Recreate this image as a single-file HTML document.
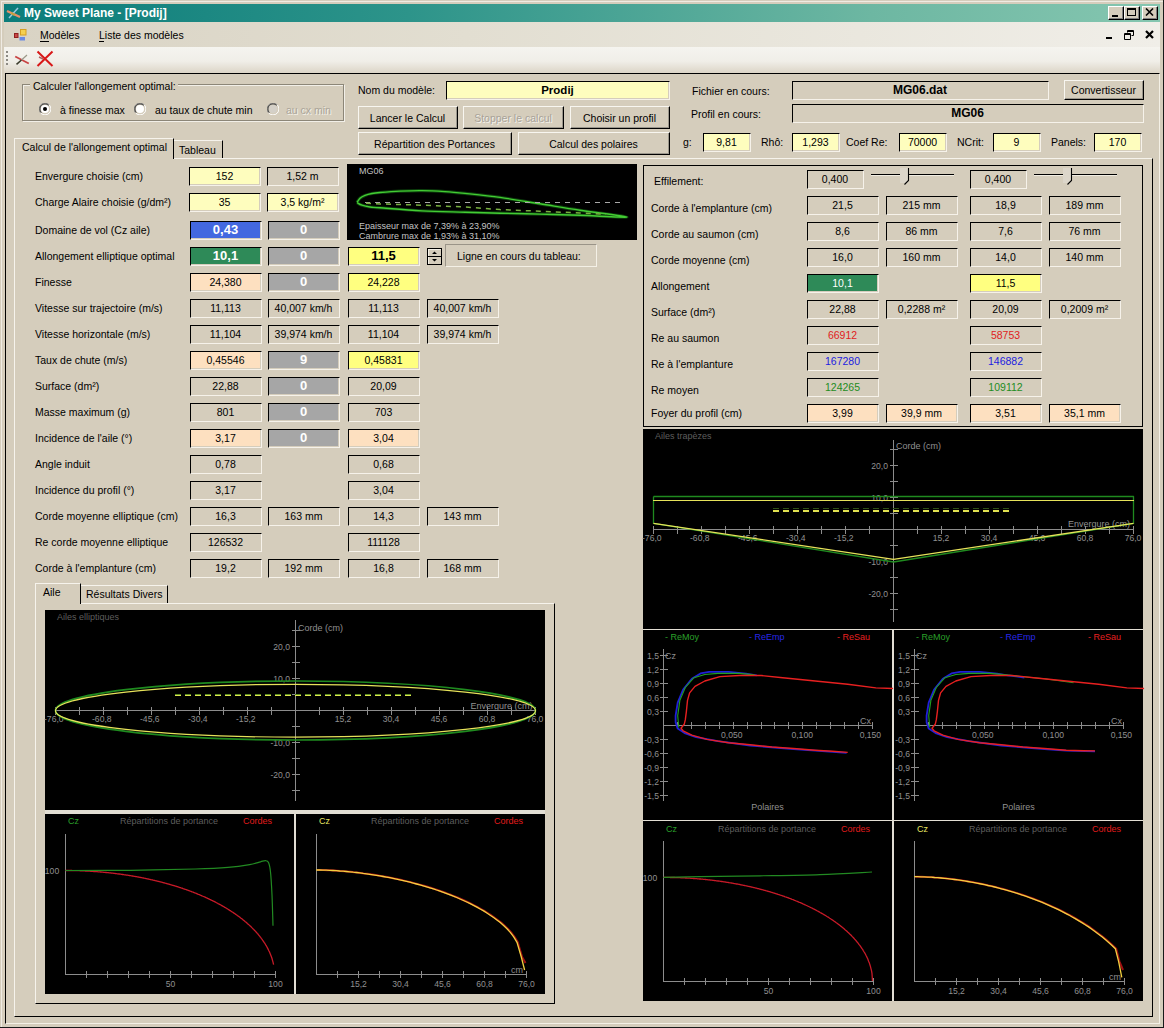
<!DOCTYPE html><html><head><meta charset="utf-8"><style>html,body{margin:0;padding:0;width:1164px;height:1028px;overflow:hidden;background:#d5cdbc;}body>div,body>svg{position:absolute;}.t{white-space:nowrap;font-family:"Liberation Sans",sans-serif;}</style></head><body><div style="left:0px;top:0px;width:1164px;height:1028px;background:#d5cdbc;"></div>
<div style="left:1px;top:1px;width:1162px;height:1px;background:#efebe3;"></div>
<div style="left:1px;top:1px;width:1px;height:1026px;background:#efebe3;"></div>
<div style="left:0px;top:1027px;width:1164px;height:1px;background:#1a1a1a;"></div>
<div style="left:1163px;top:0px;width:1px;height:1028px;background:#1a1a1a;"></div>
<div style="left:4px;top:4px;width:1156px;height:18px;background:linear-gradient(to right,#0b7c7a 0%,#2d948a 35%,#6db7a2 75%,#85c6b0 100%);"></div>
<div class="t" style="left:24px;top:5.0px;line-height:16px;font-size:12px;color:#fff;font-weight:bold;">My Sweet Plane - [Prodij]</div>
<svg style="left:5px;top:5px;width:17px;height:16px" viewBox="0 0 17 16"><path d="M2 6 L15 12" stroke="#e8906a" stroke-width="2.4"/><path d="M4 13 L13 3" stroke="#9cc8e0" stroke-width="1.5"/><path d="M6 8 L10 10" stroke="#c8a040" stroke-width="2"/></svg>
<div style="left:1108px;top:6px;width:16px;height:14px;background:#d5cdbc;border-top:1px solid #fff;border-left:1px solid #fff;border-right:1px solid #000;border-bottom:1px solid #000;box-sizing:border-box;box-shadow:inset -1px -1px 0 #808080;"></div>
<div style="left:1112px;top:15px;width:6px;height:2px;background:#000;"></div>
<div style="left:1124px;top:6px;width:16px;height:14px;background:#d5cdbc;border-top:1px solid #fff;border-left:1px solid #fff;border-right:1px solid #000;border-bottom:1px solid #000;box-sizing:border-box;box-shadow:inset -1px -1px 0 #808080;"></div>
<div style="left:1127px;top:8px;width:9px;height:8px;border:1px solid #000;border-top-width:2px;box-sizing:border-box;"></div>
<div style="left:1142px;top:6px;width:16px;height:14px;background:#d5cdbc;border-top:1px solid #fff;border-left:1px solid #fff;border-right:1px solid #000;border-bottom:1px solid #000;box-sizing:border-box;box-shadow:inset -1px -1px 0 #808080;"></div>
<svg style="left:1145px;top:8px;width:9px;height:8px" viewBox="0 0 9 8"><path d="M1 0.5 L8 7.5 M8 0.5 L1 7.5" stroke="#000" stroke-width="1.6"/></svg>
<div style="left:4px;top:22px;width:1156px;height:25px;background:linear-gradient(to right,#d9d3c4 0%,#e2ded1 40%,#f0eee8 100%);"></div>
<svg style="left:13px;top:28px;width:14px;height:14px" viewBox="0 0 14 14"><rect x="1.5" y="5.5" width="3.5" height="4" fill="#c84848" stroke="#902020" stroke-width="1"/><rect x="7.5" y="1.5" width="5.5" height="5.5" fill="#f4d050" stroke="#d8a020" stroke-width="1"/><rect x="6.5" y="9" width="5.5" height="3.5" fill="#6a8ae4"/></svg>
<div class="t" style="left:40px;top:27.0px;line-height:16px;font-size:10.5px;color:#000;font-weight:normal;">Modèles</div>
<div style="left:40px;top:41px;width:9px;height:1px;background:#000;"></div>
<div class="t" style="left:99px;top:27.0px;line-height:16px;font-size:10.5px;color:#000;font-weight:normal;">Liste des modèles</div>
<div style="left:99px;top:41px;width:5px;height:1px;background:#000;"></div>
<div style="left:1106px;top:37px;width:6px;height:2px;background:#000;"></div>
<svg style="left:1124px;top:30px;width:10px;height:10px" viewBox="0 0 10 10"><path d="M3.5 0.5 H9.5 V5.5 H7.5 M3.5 0.5 V2.5 M0.5 3.5 H6.5 V9.5 H0.5 Z M0.5 4.5 H6.5 M3.5 1.5 H9.5" stroke="#000" fill="none" stroke-width="1"/></svg>
<svg style="left:1145px;top:30px;width:9px;height:9px" viewBox="0 0 9 9"><path d="M1 1 L8 8 M8 1 L1 8" stroke="#000" stroke-width="2.2"/></svg>
<div style="left:4px;top:47px;width:1156px;height:26px;background:linear-gradient(to bottom,#f5f4ef 0%,#f0eee8 55%,#dcd5c7 100%);"></div>
<div style="left:6px;top:51px;width:2px;height:2px;background:#8c8a84;"></div>
<div style="left:6px;top:55px;width:2px;height:2px;background:#8c8a84;"></div>
<div style="left:6px;top:59px;width:2px;height:2px;background:#8c8a84;"></div>
<div style="left:6px;top:63px;width:2px;height:2px;background:#8c8a84;"></div>
<svg style="left:14px;top:53px;width:16px;height:13px" viewBox="0 0 16 13"><path d="M1.2 3.5 L14.8 10.5" stroke="#c84444" stroke-width="1.8"/><path d="M2.5 11.3 L7.5 7" stroke="#3c3c2c" stroke-width="1.6"/><path d="M7.5 7 L13 2" stroke="#9a9888" stroke-width="1.2"/></svg>
<svg style="left:36px;top:50px;width:18px;height:18px" viewBox="0 0 18 18"><path d="M3 7 L7 9" stroke="#b06060" stroke-width="1.4"/><path d="M1.5 1.5 L16.5 16 M16.5 1.5 L1.5 16" stroke="#d81818" stroke-width="2"/></svg>
<div style="left:5px;top:73px;width:1155px;height:951px;border-top:1px solid #000;border-left:1px solid #000;border-right:1px solid #f4f0e6;border-bottom:1px solid #f4f0e6;box-sizing:border-box;"></div>
<div style="left:22px;top:84px;width:322px;height:37px;border:1px solid #8c8678;box-shadow:1px 1px 0 #f2efe8, inset 1px 1px 0 #f2efe8;box-sizing:border-box;"></div>
<div style="left:30px;top:80px;width:148px;height:12px;background:#d5cdbc;"></div>
<div class="t" style="left:33px;top:78.0px;line-height:16px;font-size:10.5px;color:#000;font-weight:normal;">Calculer l'allongement optimal:</div>
<svg style="left:39px;top:103px;width:12px;height:12px" viewBox="0 0 12 12"><path d="M10.5 2.2 A5.5 5.5 0 0 0 1.5 9.8" stroke="#808080" fill="none" stroke-width="1"/><path d="M9.6 2.4 A4.5 4.5 0 0 0 2.4 9.6" stroke="#404040" fill="none" stroke-width="1"/><path d="M1.8 10.2 A5.5 5.5 0 0 0 10.2 1.8" stroke="#fff" fill="none" stroke-width="1"/><circle cx="6" cy="6" r="4" fill="#fff"/><circle cx="6" cy="6" r="2" fill="#000"/></svg>
<div class="t" style="left:60px;top:102.0px;line-height:16px;font-size:10.5px;color:#000;font-weight:normal;">à finesse max</div>
<svg style="left:134px;top:103px;width:12px;height:12px" viewBox="0 0 12 12"><path d="M10.5 2.2 A5.5 5.5 0 0 0 1.5 9.8" stroke="#808080" fill="none" stroke-width="1"/><path d="M9.6 2.4 A4.5 4.5 0 0 0 2.4 9.6" stroke="#404040" fill="none" stroke-width="1"/><path d="M1.8 10.2 A5.5 5.5 0 0 0 10.2 1.8" stroke="#fff" fill="none" stroke-width="1"/><circle cx="6" cy="6" r="4" fill="#fff"/></svg>
<div class="t" style="left:155px;top:102.0px;line-height:16px;font-size:10.5px;color:#000;font-weight:normal;">au taux de chute min</div>
<svg style="left:267px;top:103px;width:12px;height:12px" viewBox="0 0 12 12"><path d="M10.5 2.2 A5.5 5.5 0 0 0 1.5 9.8" stroke="#808080" fill="none" stroke-width="1"/><path d="M9.6 2.4 A4.5 4.5 0 0 0 2.4 9.6" stroke="#404040" fill="none" stroke-width="1"/><path d="M1.8 10.2 A5.5 5.5 0 0 0 10.2 1.8" stroke="#fff" fill="none" stroke-width="1"/><circle cx="6" cy="6" r="4" fill="#d4d0c8"/></svg>
<div class="t" style="left:287px;top:103.0px;line-height:16px;font-size:10.5px;color:#f4f1ea;font-weight:normal;">au cx min</div>
<div class="t" style="left:286px;top:102.0px;line-height:16px;font-size:10.5px;color:#aaa498;font-weight:normal;">au cx min</div>
<div class="t" style="left:358px;top:82.0px;line-height:16px;font-size:10.5px;color:#000;font-weight:normal;">Nom du modèle:</div>
<div style="left:446px;top:81px;width:224px;height:19px;background:#fefdbe;border-top:1px solid #000;border-left:1px solid #000;border-bottom:1px solid #f6f2ea;border-right:1px solid #f6f2ea;box-sizing:border-box;box-shadow:inset -1px -1px 0 #d5cdbc;"></div>
<div class="t" style="left:445.5px;width:224px;text-align:center;top:81.5px;line-height:16px;font-size:11.5px;color:#000;font-weight:bold;">Prodij</div>
<div style="left:358px;top:106px;width:100px;height:23px;background:#d5cdbc;border-top:1px solid #f8f6f0;border-left:1px solid #f8f6f0;border-right:1px solid #000;border-bottom:1px solid #000;box-sizing:border-box;box-shadow:inset -1px -1px 0 #9a968c;"></div>
<div class="t" style="left:357.5px;width:100px;text-align:center;top:109.5px;line-height:16px;font-size:10.5px;color:#000;font-weight:normal;">Lancer le Calcul</div>
<div style="left:463px;top:106px;width:101px;height:23px;background:#d5cdbc;border-top:1px solid #f8f6f0;border-left:1px solid #f8f6f0;border-right:1px solid #000;border-bottom:1px solid #000;box-sizing:border-box;box-shadow:inset -1px -1px 0 #9a968c;"></div>
<div class="t" style="left:463.5px;width:101px;text-align:center;top:110.5px;line-height:16px;font-size:10.5px;color:#f4f2ec;font-weight:normal;">Stopper le calcul</div>
<div class="t" style="left:462.5px;width:101px;text-align:center;top:109.5px;line-height:16px;font-size:10.5px;color:#a8a298;font-weight:normal;">Stopper le calcul</div>
<div style="left:570px;top:106px;width:100px;height:23px;background:#d5cdbc;border-top:1px solid #f8f6f0;border-left:1px solid #f8f6f0;border-right:1px solid #000;border-bottom:1px solid #000;box-sizing:border-box;box-shadow:inset -1px -1px 0 #9a968c;"></div>
<div class="t" style="left:569.5px;width:100px;text-align:center;top:109.5px;line-height:16px;font-size:10.5px;color:#000;font-weight:normal;">Choisir un profil</div>
<div style="left:358px;top:132px;width:154px;height:23px;background:#d5cdbc;border-top:1px solid #f8f6f0;border-left:1px solid #f8f6f0;border-right:1px solid #000;border-bottom:1px solid #000;box-sizing:border-box;box-shadow:inset -1px -1px 0 #9a968c;"></div>
<div class="t" style="left:357.5px;width:154px;text-align:center;top:135.5px;line-height:16px;font-size:10.5px;color:#000;font-weight:normal;">Répartition des Portances</div>
<div style="left:518px;top:132px;width:152px;height:23px;background:#d5cdbc;border-top:1px solid #f8f6f0;border-left:1px solid #f8f6f0;border-right:1px solid #000;border-bottom:1px solid #000;box-sizing:border-box;box-shadow:inset -1px -1px 0 #9a968c;"></div>
<div class="t" style="left:517.5px;width:152px;text-align:center;top:135.5px;line-height:16px;font-size:10.5px;color:#000;font-weight:normal;">Calcul des polaires</div>
<div class="t" style="left:692px;top:83.0px;line-height:16px;font-size:10.5px;color:#000;font-weight:normal;">Fichier en cours:</div>
<div style="left:792px;top:81px;width:257px;height:19px;background:#d5cdbc;border-top:1px solid #000;border-left:1px solid #000;border-bottom:1px solid #f6f2ea;border-right:1px solid #f6f2ea;box-sizing:border-box;box-shadow:inset -1px -1px 0 #d5cdbc;"></div>
<div class="t" style="left:791.5px;width:257px;text-align:center;top:81.5px;line-height:16px;font-size:12px;color:#000;font-weight:bold;">MG06.dat</div>
<div style="left:1064px;top:80px;width:80px;height:20px;background:#d5cdbc;border-top:1px solid #f8f6f0;border-left:1px solid #f8f6f0;border-right:1px solid #000;border-bottom:1px solid #000;box-sizing:border-box;box-shadow:inset -1px -1px 0 #9a968c;"></div>
<div class="t" style="left:1063.5px;width:80px;text-align:center;top:82.0px;line-height:16px;font-size:10.5px;color:#000;font-weight:normal;">Convertisseur</div>
<div class="t" style="left:691px;top:106.0px;line-height:16px;font-size:10.5px;color:#000;font-weight:normal;">Profil en cours:</div>
<div style="left:792px;top:104px;width:352px;height:19px;background:#d5cdbc;border-top:1px solid #000;border-left:1px solid #000;border-bottom:1px solid #f6f2ea;border-right:1px solid #f6f2ea;box-sizing:border-box;box-shadow:inset -1px -1px 0 #d5cdbc;"></div>
<div class="t" style="left:791.5px;width:352px;text-align:center;top:104.5px;line-height:16px;font-size:12px;color:#000;font-weight:bold;">MG06</div>
<div class="t" style="left:683px;top:134.0px;line-height:16px;font-size:10.5px;color:#000;font-weight:normal;">g:</div>
<div style="left:703px;top:133px;width:48px;height:19px;background:#fefdbe;border-top:1px solid #000;border-left:1px solid #000;border-bottom:1px solid #f6f2ea;border-right:1px solid #f6f2ea;box-sizing:border-box;box-shadow:inset -1px -1px 0 #d5cdbc;"></div>
<div class="t" style="left:702.5px;width:48px;text-align:center;top:133.5px;line-height:16px;font-size:10.5px;color:#000;font-weight:normal;">9,81</div>
<div class="t" style="left:761px;top:134.0px;line-height:16px;font-size:10.5px;color:#000;font-weight:normal;">Rhô:</div>
<div style="left:792px;top:133px;width:48px;height:19px;background:#fefdbe;border-top:1px solid #000;border-left:1px solid #000;border-bottom:1px solid #f6f2ea;border-right:1px solid #f6f2ea;box-sizing:border-box;box-shadow:inset -1px -1px 0 #d5cdbc;"></div>
<div class="t" style="left:791.5px;width:48px;text-align:center;top:133.5px;line-height:16px;font-size:10.5px;color:#000;font-weight:normal;">1,293</div>
<div class="t" style="left:846px;top:134.0px;line-height:16px;font-size:10.5px;color:#000;font-weight:normal;">Coef Re:</div>
<div style="left:899px;top:133px;width:48px;height:19px;background:#fefdbe;border-top:1px solid #000;border-left:1px solid #000;border-bottom:1px solid #f6f2ea;border-right:1px solid #f6f2ea;box-sizing:border-box;box-shadow:inset -1px -1px 0 #d5cdbc;"></div>
<div class="t" style="left:898.5px;width:48px;text-align:center;top:133.5px;line-height:16px;font-size:10.5px;color:#000;font-weight:normal;">70000</div>
<div class="t" style="left:957px;top:134.0px;line-height:16px;font-size:10.5px;color:#000;font-weight:normal;">NCrit:</div>
<div style="left:993px;top:133px;width:48px;height:19px;background:#fefdbe;border-top:1px solid #000;border-left:1px solid #000;border-bottom:1px solid #f6f2ea;border-right:1px solid #f6f2ea;box-sizing:border-box;box-shadow:inset -1px -1px 0 #d5cdbc;"></div>
<div class="t" style="left:992.5px;width:48px;text-align:center;top:133.5px;line-height:16px;font-size:10.5px;color:#000;font-weight:normal;">9</div>
<div class="t" style="left:1051px;top:134.0px;line-height:16px;font-size:10.5px;color:#000;font-weight:normal;">Panels:</div>
<div style="left:1094px;top:133px;width:48px;height:19px;background:#fefdbe;border-top:1px solid #000;border-left:1px solid #000;border-bottom:1px solid #f6f2ea;border-right:1px solid #f6f2ea;box-sizing:border-box;box-shadow:inset -1px -1px 0 #d5cdbc;"></div>
<div class="t" style="left:1093.5px;width:48px;text-align:center;top:133.5px;line-height:16px;font-size:10.5px;color:#000;font-weight:normal;">170</div>
<div style="left:14px;top:158px;width:1139px;height:859px;border-top:1px solid #f6f3ec;border-left:1px solid #f6f3ec;border-right:1px solid #000;border-bottom:1px solid #000;box-sizing:border-box;"></div>
<div style="left:14px;top:138px;width:160px;height:21px;background:#d5cdbc;border-top:1px solid #f6f3ec;border-left:1px solid #f6f3ec;border-right:1px solid #000;box-sizing:border-box;"></div>
<div class="t" style="left:22px;top:139.3px;line-height:16px;font-size:10.5px;color:#000;font-weight:normal;">Calcul de l'allongement optimal</div>
<div style="left:174px;top:140px;width:49px;height:18px;background:#d5cdbc;border-top:1px solid #f6f3ec;border-right:1px solid #000;box-sizing:border-box;"></div>
<div class="t" style="left:179px;top:141.5px;line-height:16px;font-size:10.5px;color:#000;font-weight:normal;">Tableau</div>
<div class="t" style="left:35px;top:168.0px;line-height:16px;font-size:10.5px;color:#000;font-weight:normal;">Envergure choisie (cm)</div>
<div style="left:189px;top:167px;width:72px;height:19px;background:#fefdbe;border-top:1px solid #000;border-left:1px solid #000;border-bottom:1px solid #f6f2ea;border-right:1px solid #f6f2ea;box-sizing:border-box;box-shadow:inset -1px -1px 0 #d5cdbc;"></div>
<div class="t" style="left:188.5px;width:72px;text-align:center;top:167.5px;line-height:16px;font-size:10.5px;color:#000;font-weight:normal;">152</div>
<div style="left:267px;top:167px;width:72px;height:19px;background:#d5cdbc;border-top:1px solid #000;border-left:1px solid #000;border-bottom:1px solid #f6f2ea;border-right:1px solid #f6f2ea;box-sizing:border-box;box-shadow:inset -1px -1px 0 #d5cdbc;"></div>
<div class="t" style="left:266.5px;width:72px;text-align:center;top:167.5px;line-height:16px;font-size:10.5px;color:#000;font-weight:normal;">1,52 m</div>
<div class="t" style="left:35px;top:194.0px;line-height:16px;font-size:10.5px;color:#000;font-weight:normal;">Charge Alaire choisie (g/dm²)</div>
<div style="left:189px;top:193px;width:72px;height:19px;background:#fefdbe;border-top:1px solid #000;border-left:1px solid #000;border-bottom:1px solid #f6f2ea;border-right:1px solid #f6f2ea;box-sizing:border-box;box-shadow:inset -1px -1px 0 #d5cdbc;"></div>
<div class="t" style="left:188.5px;width:72px;text-align:center;top:193.5px;line-height:16px;font-size:10.5px;color:#000;font-weight:normal;">35</div>
<div style="left:267px;top:193px;width:72px;height:19px;background:#fefdbe;border-top:1px solid #000;border-left:1px solid #000;border-bottom:1px solid #f6f2ea;border-right:1px solid #f6f2ea;box-sizing:border-box;box-shadow:inset -1px -1px 0 #d5cdbc;"></div>
<div class="t" style="left:266.5px;width:72px;text-align:center;top:193.5px;line-height:16px;font-size:10.5px;color:#000;font-weight:normal;">3,5 kg/m²</div>
<div class="t" style="left:35px;top:222.0px;line-height:16px;font-size:10.5px;color:#000;font-weight:normal;">Domaine de vol (Cz aile)</div>
<div style="left:190px;top:221px;width:72px;height:19px;background:#4368e0;border-top:1px solid #000;border-left:1px solid #000;border-bottom:1px solid #f6f2ea;border-right:1px solid #f6f2ea;box-sizing:border-box;box-shadow:inset -1px -1px 0 #d5cdbc;"></div>
<div class="t" style="left:189.5px;width:72px;text-align:center;top:221.5px;line-height:16px;font-size:13px;color:#fff;font-weight:bold;">0,43</div>
<div style="left:268px;top:221px;width:72px;height:19px;background:#a6a6a6;border-top:1px solid #000;border-left:1px solid #000;border-bottom:1px solid #f6f2ea;border-right:1px solid #f6f2ea;box-sizing:border-box;box-shadow:inset -1px -1px 0 #d5cdbc;"></div>
<div class="t" style="left:267.5px;width:72px;text-align:center;top:221.5px;line-height:16px;font-size:13px;color:#fff;font-weight:bold;">0</div>
<div class="t" style="left:35px;top:248.0px;line-height:16px;font-size:10.5px;color:#000;font-weight:normal;">Allongement elliptique optimal</div>
<div style="left:190px;top:247px;width:72px;height:19px;background:#2e8a58;border-top:1px solid #000;border-left:1px solid #000;border-bottom:1px solid #f6f2ea;border-right:1px solid #f6f2ea;box-sizing:border-box;box-shadow:inset -1px -1px 0 #d5cdbc;"></div>
<div class="t" style="left:189.5px;width:72px;text-align:center;top:247.5px;line-height:16px;font-size:13px;color:#fff;font-weight:bold;">10,1</div>
<div style="left:268px;top:247px;width:72px;height:19px;background:#a6a6a6;border-top:1px solid #000;border-left:1px solid #000;border-bottom:1px solid #f6f2ea;border-right:1px solid #f6f2ea;box-sizing:border-box;box-shadow:inset -1px -1px 0 #d5cdbc;"></div>
<div class="t" style="left:267.5px;width:72px;text-align:center;top:247.5px;line-height:16px;font-size:13px;color:#fff;font-weight:bold;">0</div>
<div style="left:348px;top:247px;width:72px;height:19px;background:#ffff80;border-top:1px solid #000;border-left:1px solid #000;border-bottom:1px solid #f6f2ea;border-right:1px solid #f6f2ea;box-sizing:border-box;box-shadow:inset -1px -1px 0 #d5cdbc;"></div>
<div class="t" style="left:347.5px;width:72px;text-align:center;top:247.5px;line-height:16px;font-size:13px;color:#000;font-weight:bold;">11,5</div>
<div class="t" style="left:35px;top:274.0px;line-height:16px;font-size:10.5px;color:#000;font-weight:normal;">Finesse</div>
<div style="left:190px;top:273px;width:72px;height:19px;background:#fde0c0;border-top:1px solid #000;border-left:1px solid #000;border-bottom:1px solid #f6f2ea;border-right:1px solid #f6f2ea;box-sizing:border-box;box-shadow:inset -1px -1px 0 #d5cdbc;"></div>
<div class="t" style="left:189.5px;width:72px;text-align:center;top:273.5px;line-height:16px;font-size:10.5px;color:#000;font-weight:normal;">24,380</div>
<div style="left:268px;top:273px;width:72px;height:19px;background:#a6a6a6;border-top:1px solid #000;border-left:1px solid #000;border-bottom:1px solid #f6f2ea;border-right:1px solid #f6f2ea;box-sizing:border-box;box-shadow:inset -1px -1px 0 #d5cdbc;"></div>
<div class="t" style="left:267.5px;width:72px;text-align:center;top:273.5px;line-height:16px;font-size:13px;color:#fff;font-weight:bold;">0</div>
<div style="left:348px;top:273px;width:72px;height:19px;background:#ffff80;border-top:1px solid #000;border-left:1px solid #000;border-bottom:1px solid #f6f2ea;border-right:1px solid #f6f2ea;box-sizing:border-box;box-shadow:inset -1px -1px 0 #d5cdbc;"></div>
<div class="t" style="left:347.5px;width:72px;text-align:center;top:273.5px;line-height:16px;font-size:10.5px;color:#000;font-weight:normal;">24,228</div>
<div class="t" style="left:35px;top:300.0px;line-height:16px;font-size:10.5px;color:#000;font-weight:normal;">Vitesse sur trajectoire (m/s)</div>
<div style="left:190px;top:299px;width:72px;height:19px;background:#d5cdbc;border-top:1px solid #000;border-left:1px solid #000;border-bottom:1px solid #f6f2ea;border-right:1px solid #f6f2ea;box-sizing:border-box;box-shadow:inset -1px -1px 0 #d5cdbc;"></div>
<div class="t" style="left:189.5px;width:72px;text-align:center;top:299.5px;line-height:16px;font-size:10.5px;color:#000;font-weight:normal;">11,113</div>
<div style="left:268px;top:299px;width:72px;height:19px;background:#d5cdbc;border-top:1px solid #000;border-left:1px solid #000;border-bottom:1px solid #f6f2ea;border-right:1px solid #f6f2ea;box-sizing:border-box;box-shadow:inset -1px -1px 0 #d5cdbc;"></div>
<div class="t" style="left:267.5px;width:72px;text-align:center;top:299.5px;line-height:16px;font-size:10.5px;color:#000;font-weight:normal;">40,007 km/h</div>
<div style="left:348px;top:299px;width:72px;height:19px;background:#d5cdbc;border-top:1px solid #000;border-left:1px solid #000;border-bottom:1px solid #f6f2ea;border-right:1px solid #f6f2ea;box-sizing:border-box;box-shadow:inset -1px -1px 0 #d5cdbc;"></div>
<div class="t" style="left:347.5px;width:72px;text-align:center;top:299.5px;line-height:16px;font-size:10.5px;color:#000;font-weight:normal;">11,113</div>
<div style="left:427px;top:299px;width:72px;height:19px;background:#d5cdbc;border-top:1px solid #000;border-left:1px solid #000;border-bottom:1px solid #f6f2ea;border-right:1px solid #f6f2ea;box-sizing:border-box;box-shadow:inset -1px -1px 0 #d5cdbc;"></div>
<div class="t" style="left:426.5px;width:72px;text-align:center;top:299.5px;line-height:16px;font-size:10.5px;color:#000;font-weight:normal;">40,007 km/h</div>
<div class="t" style="left:35px;top:326.0px;line-height:16px;font-size:10.5px;color:#000;font-weight:normal;">Vitesse horizontale (m/s)</div>
<div style="left:190px;top:325px;width:72px;height:19px;background:#d5cdbc;border-top:1px solid #000;border-left:1px solid #000;border-bottom:1px solid #f6f2ea;border-right:1px solid #f6f2ea;box-sizing:border-box;box-shadow:inset -1px -1px 0 #d5cdbc;"></div>
<div class="t" style="left:189.5px;width:72px;text-align:center;top:325.5px;line-height:16px;font-size:10.5px;color:#000;font-weight:normal;">11,104</div>
<div style="left:268px;top:325px;width:72px;height:19px;background:#d5cdbc;border-top:1px solid #000;border-left:1px solid #000;border-bottom:1px solid #f6f2ea;border-right:1px solid #f6f2ea;box-sizing:border-box;box-shadow:inset -1px -1px 0 #d5cdbc;"></div>
<div class="t" style="left:267.5px;width:72px;text-align:center;top:325.5px;line-height:16px;font-size:10.5px;color:#000;font-weight:normal;">39,974 km/h</div>
<div style="left:348px;top:325px;width:72px;height:19px;background:#d5cdbc;border-top:1px solid #000;border-left:1px solid #000;border-bottom:1px solid #f6f2ea;border-right:1px solid #f6f2ea;box-sizing:border-box;box-shadow:inset -1px -1px 0 #d5cdbc;"></div>
<div class="t" style="left:347.5px;width:72px;text-align:center;top:325.5px;line-height:16px;font-size:10.5px;color:#000;font-weight:normal;">11,104</div>
<div style="left:427px;top:325px;width:72px;height:19px;background:#d5cdbc;border-top:1px solid #000;border-left:1px solid #000;border-bottom:1px solid #f6f2ea;border-right:1px solid #f6f2ea;box-sizing:border-box;box-shadow:inset -1px -1px 0 #d5cdbc;"></div>
<div class="t" style="left:426.5px;width:72px;text-align:center;top:325.5px;line-height:16px;font-size:10.5px;color:#000;font-weight:normal;">39,974 km/h</div>
<div class="t" style="left:35px;top:352.0px;line-height:16px;font-size:10.5px;color:#000;font-weight:normal;">Taux de chute (m/s)</div>
<div style="left:190px;top:351px;width:72px;height:19px;background:#fde0c0;border-top:1px solid #000;border-left:1px solid #000;border-bottom:1px solid #f6f2ea;border-right:1px solid #f6f2ea;box-sizing:border-box;box-shadow:inset -1px -1px 0 #d5cdbc;"></div>
<div class="t" style="left:189.5px;width:72px;text-align:center;top:351.5px;line-height:16px;font-size:10.5px;color:#000;font-weight:normal;">0,45546</div>
<div style="left:268px;top:351px;width:72px;height:19px;background:#a6a6a6;border-top:1px solid #000;border-left:1px solid #000;border-bottom:1px solid #f6f2ea;border-right:1px solid #f6f2ea;box-sizing:border-box;box-shadow:inset -1px -1px 0 #d5cdbc;"></div>
<div class="t" style="left:267.5px;width:72px;text-align:center;top:351.5px;line-height:16px;font-size:13px;color:#fff;font-weight:bold;">9</div>
<div style="left:348px;top:351px;width:72px;height:19px;background:#ffff80;border-top:1px solid #000;border-left:1px solid #000;border-bottom:1px solid #f6f2ea;border-right:1px solid #f6f2ea;box-sizing:border-box;box-shadow:inset -1px -1px 0 #d5cdbc;"></div>
<div class="t" style="left:347.5px;width:72px;text-align:center;top:351.5px;line-height:16px;font-size:10.5px;color:#000;font-weight:normal;">0,45831</div>
<div class="t" style="left:35px;top:378.0px;line-height:16px;font-size:10.5px;color:#000;font-weight:normal;">Surface (dm²)</div>
<div style="left:190px;top:377px;width:72px;height:19px;background:#d5cdbc;border-top:1px solid #000;border-left:1px solid #000;border-bottom:1px solid #f6f2ea;border-right:1px solid #f6f2ea;box-sizing:border-box;box-shadow:inset -1px -1px 0 #d5cdbc;"></div>
<div class="t" style="left:189.5px;width:72px;text-align:center;top:377.5px;line-height:16px;font-size:10.5px;color:#000;font-weight:normal;">22,88</div>
<div style="left:268px;top:377px;width:72px;height:19px;background:#a6a6a6;border-top:1px solid #000;border-left:1px solid #000;border-bottom:1px solid #f6f2ea;border-right:1px solid #f6f2ea;box-sizing:border-box;box-shadow:inset -1px -1px 0 #d5cdbc;"></div>
<div class="t" style="left:267.5px;width:72px;text-align:center;top:377.5px;line-height:16px;font-size:13px;color:#fff;font-weight:bold;">0</div>
<div style="left:348px;top:377px;width:72px;height:19px;background:#d5cdbc;border-top:1px solid #000;border-left:1px solid #000;border-bottom:1px solid #f6f2ea;border-right:1px solid #f6f2ea;box-sizing:border-box;box-shadow:inset -1px -1px 0 #d5cdbc;"></div>
<div class="t" style="left:347.5px;width:72px;text-align:center;top:377.5px;line-height:16px;font-size:10.5px;color:#000;font-weight:normal;">20,09</div>
<div class="t" style="left:35px;top:404.0px;line-height:16px;font-size:10.5px;color:#000;font-weight:normal;">Masse maximum (g)</div>
<div style="left:190px;top:403px;width:72px;height:19px;background:#d5cdbc;border-top:1px solid #000;border-left:1px solid #000;border-bottom:1px solid #f6f2ea;border-right:1px solid #f6f2ea;box-sizing:border-box;box-shadow:inset -1px -1px 0 #d5cdbc;"></div>
<div class="t" style="left:189.5px;width:72px;text-align:center;top:403.5px;line-height:16px;font-size:10.5px;color:#000;font-weight:normal;">801</div>
<div style="left:268px;top:403px;width:72px;height:19px;background:#a6a6a6;border-top:1px solid #000;border-left:1px solid #000;border-bottom:1px solid #f6f2ea;border-right:1px solid #f6f2ea;box-sizing:border-box;box-shadow:inset -1px -1px 0 #d5cdbc;"></div>
<div class="t" style="left:267.5px;width:72px;text-align:center;top:403.5px;line-height:16px;font-size:13px;color:#fff;font-weight:bold;">0</div>
<div style="left:348px;top:403px;width:72px;height:19px;background:#d5cdbc;border-top:1px solid #000;border-left:1px solid #000;border-bottom:1px solid #f6f2ea;border-right:1px solid #f6f2ea;box-sizing:border-box;box-shadow:inset -1px -1px 0 #d5cdbc;"></div>
<div class="t" style="left:347.5px;width:72px;text-align:center;top:403.5px;line-height:16px;font-size:10.5px;color:#000;font-weight:normal;">703</div>
<div class="t" style="left:35px;top:430.0px;line-height:16px;font-size:10.5px;color:#000;font-weight:normal;">Incidence de l'aile (°)</div>
<div style="left:190px;top:429px;width:72px;height:19px;background:#fde0c0;border-top:1px solid #000;border-left:1px solid #000;border-bottom:1px solid #f6f2ea;border-right:1px solid #f6f2ea;box-sizing:border-box;box-shadow:inset -1px -1px 0 #d5cdbc;"></div>
<div class="t" style="left:189.5px;width:72px;text-align:center;top:429.5px;line-height:16px;font-size:10.5px;color:#000;font-weight:normal;">3,17</div>
<div style="left:268px;top:429px;width:72px;height:19px;background:#a6a6a6;border-top:1px solid #000;border-left:1px solid #000;border-bottom:1px solid #f6f2ea;border-right:1px solid #f6f2ea;box-sizing:border-box;box-shadow:inset -1px -1px 0 #d5cdbc;"></div>
<div class="t" style="left:267.5px;width:72px;text-align:center;top:429.5px;line-height:16px;font-size:13px;color:#fff;font-weight:bold;">0</div>
<div style="left:348px;top:429px;width:72px;height:19px;background:#fde0c0;border-top:1px solid #000;border-left:1px solid #000;border-bottom:1px solid #f6f2ea;border-right:1px solid #f6f2ea;box-sizing:border-box;box-shadow:inset -1px -1px 0 #d5cdbc;"></div>
<div class="t" style="left:347.5px;width:72px;text-align:center;top:429.5px;line-height:16px;font-size:10.5px;color:#000;font-weight:normal;">3,04</div>
<div class="t" style="left:35px;top:456.0px;line-height:16px;font-size:10.5px;color:#000;font-weight:normal;">Angle induit</div>
<div style="left:190px;top:455px;width:72px;height:19px;background:#d5cdbc;border-top:1px solid #000;border-left:1px solid #000;border-bottom:1px solid #f6f2ea;border-right:1px solid #f6f2ea;box-sizing:border-box;box-shadow:inset -1px -1px 0 #d5cdbc;"></div>
<div class="t" style="left:189.5px;width:72px;text-align:center;top:455.5px;line-height:16px;font-size:10.5px;color:#000;font-weight:normal;">0,78</div>
<div style="left:348px;top:455px;width:72px;height:19px;background:#d5cdbc;border-top:1px solid #000;border-left:1px solid #000;border-bottom:1px solid #f6f2ea;border-right:1px solid #f6f2ea;box-sizing:border-box;box-shadow:inset -1px -1px 0 #d5cdbc;"></div>
<div class="t" style="left:347.5px;width:72px;text-align:center;top:455.5px;line-height:16px;font-size:10.5px;color:#000;font-weight:normal;">0,68</div>
<div class="t" style="left:35px;top:482.0px;line-height:16px;font-size:10.5px;color:#000;font-weight:normal;">Incidence du profil (°)</div>
<div style="left:190px;top:481px;width:72px;height:19px;background:#d5cdbc;border-top:1px solid #000;border-left:1px solid #000;border-bottom:1px solid #f6f2ea;border-right:1px solid #f6f2ea;box-sizing:border-box;box-shadow:inset -1px -1px 0 #d5cdbc;"></div>
<div class="t" style="left:189.5px;width:72px;text-align:center;top:481.5px;line-height:16px;font-size:10.5px;color:#000;font-weight:normal;">3,17</div>
<div style="left:348px;top:481px;width:72px;height:19px;background:#d5cdbc;border-top:1px solid #000;border-left:1px solid #000;border-bottom:1px solid #f6f2ea;border-right:1px solid #f6f2ea;box-sizing:border-box;box-shadow:inset -1px -1px 0 #d5cdbc;"></div>
<div class="t" style="left:347.5px;width:72px;text-align:center;top:481.5px;line-height:16px;font-size:10.5px;color:#000;font-weight:normal;">3,04</div>
<div class="t" style="left:35px;top:508.0px;line-height:16px;font-size:10.5px;color:#000;font-weight:normal;">Corde moyenne elliptique (cm)</div>
<div style="left:190px;top:507px;width:72px;height:19px;background:#d5cdbc;border-top:1px solid #000;border-left:1px solid #000;border-bottom:1px solid #f6f2ea;border-right:1px solid #f6f2ea;box-sizing:border-box;box-shadow:inset -1px -1px 0 #d5cdbc;"></div>
<div class="t" style="left:189.5px;width:72px;text-align:center;top:507.5px;line-height:16px;font-size:10.5px;color:#000;font-weight:normal;">16,3</div>
<div style="left:268px;top:507px;width:72px;height:19px;background:#d5cdbc;border-top:1px solid #000;border-left:1px solid #000;border-bottom:1px solid #f6f2ea;border-right:1px solid #f6f2ea;box-sizing:border-box;box-shadow:inset -1px -1px 0 #d5cdbc;"></div>
<div class="t" style="left:267.5px;width:72px;text-align:center;top:507.5px;line-height:16px;font-size:10.5px;color:#000;font-weight:normal;">163 mm</div>
<div style="left:348px;top:507px;width:72px;height:19px;background:#d5cdbc;border-top:1px solid #000;border-left:1px solid #000;border-bottom:1px solid #f6f2ea;border-right:1px solid #f6f2ea;box-sizing:border-box;box-shadow:inset -1px -1px 0 #d5cdbc;"></div>
<div class="t" style="left:347.5px;width:72px;text-align:center;top:507.5px;line-height:16px;font-size:10.5px;color:#000;font-weight:normal;">14,3</div>
<div style="left:427px;top:507px;width:72px;height:19px;background:#d5cdbc;border-top:1px solid #000;border-left:1px solid #000;border-bottom:1px solid #f6f2ea;border-right:1px solid #f6f2ea;box-sizing:border-box;box-shadow:inset -1px -1px 0 #d5cdbc;"></div>
<div class="t" style="left:426.5px;width:72px;text-align:center;top:507.5px;line-height:16px;font-size:10.5px;color:#000;font-weight:normal;">143 mm</div>
<div class="t" style="left:35px;top:534.0px;line-height:16px;font-size:10.5px;color:#000;font-weight:normal;">Re corde moyenne elliptique</div>
<div style="left:190px;top:533px;width:72px;height:19px;background:#d5cdbc;border-top:1px solid #000;border-left:1px solid #000;border-bottom:1px solid #f6f2ea;border-right:1px solid #f6f2ea;box-sizing:border-box;box-shadow:inset -1px -1px 0 #d5cdbc;"></div>
<div class="t" style="left:189.5px;width:72px;text-align:center;top:533.5px;line-height:16px;font-size:10.5px;color:#000;font-weight:normal;">126532</div>
<div style="left:348px;top:533px;width:72px;height:19px;background:#d5cdbc;border-top:1px solid #000;border-left:1px solid #000;border-bottom:1px solid #f6f2ea;border-right:1px solid #f6f2ea;box-sizing:border-box;box-shadow:inset -1px -1px 0 #d5cdbc;"></div>
<div class="t" style="left:347.5px;width:72px;text-align:center;top:533.5px;line-height:16px;font-size:10.5px;color:#000;font-weight:normal;">111128</div>
<div class="t" style="left:35px;top:560.0px;line-height:16px;font-size:10.5px;color:#000;font-weight:normal;">Corde à l'emplanture (cm)</div>
<div style="left:190px;top:559px;width:72px;height:19px;background:#d5cdbc;border-top:1px solid #000;border-left:1px solid #000;border-bottom:1px solid #f6f2ea;border-right:1px solid #f6f2ea;box-sizing:border-box;box-shadow:inset -1px -1px 0 #d5cdbc;"></div>
<div class="t" style="left:189.5px;width:72px;text-align:center;top:559.5px;line-height:16px;font-size:10.5px;color:#000;font-weight:normal;">19,2</div>
<div style="left:268px;top:559px;width:72px;height:19px;background:#d5cdbc;border-top:1px solid #000;border-left:1px solid #000;border-bottom:1px solid #f6f2ea;border-right:1px solid #f6f2ea;box-sizing:border-box;box-shadow:inset -1px -1px 0 #d5cdbc;"></div>
<div class="t" style="left:267.5px;width:72px;text-align:center;top:559.5px;line-height:16px;font-size:10.5px;color:#000;font-weight:normal;">192 mm</div>
<div style="left:348px;top:559px;width:72px;height:19px;background:#d5cdbc;border-top:1px solid #000;border-left:1px solid #000;border-bottom:1px solid #f6f2ea;border-right:1px solid #f6f2ea;box-sizing:border-box;box-shadow:inset -1px -1px 0 #d5cdbc;"></div>
<div class="t" style="left:347.5px;width:72px;text-align:center;top:559.5px;line-height:16px;font-size:10.5px;color:#000;font-weight:normal;">16,8</div>
<div style="left:427px;top:559px;width:72px;height:19px;background:#d5cdbc;border-top:1px solid #000;border-left:1px solid #000;border-bottom:1px solid #f6f2ea;border-right:1px solid #f6f2ea;box-sizing:border-box;box-shadow:inset -1px -1px 0 #d5cdbc;"></div>
<div class="t" style="left:426.5px;width:72px;text-align:center;top:559.5px;line-height:16px;font-size:10.5px;color:#000;font-weight:normal;">168 mm</div>
<div style="left:427px;top:248px;width:15px;height:17px;background:#d5cdbc;border:1px solid #000;box-sizing:border-box;box-shadow:inset 1px 1px 0 #f4f0e6;"></div>
<div style="left:428px;top:256px;width:13px;height:1px;background:#000;"></div>
<svg style="left:427px;top:248px;width:15px;height:17px" viewBox="0 0 15 17"><path d="M5 6 H10 L7.5 3.5 Z M5 11 H10 L7.5 13.5 Z" fill="#000"/></svg>
<div style="left:445px;top:244px;width:152px;height:23px;border-top:1px solid #9a9488;border-left:1px solid #9a9488;border-bottom:1px solid #f4f0e6;border-right:1px solid #f4f0e6;box-sizing:border-box;"></div>
<div class="t" style="left:457px;top:248.0px;line-height:16px;font-size:10.5px;color:#000;font-weight:normal;">Ligne en cours du tableau:</div>
<div style="left:643px;top:165px;width:500px;height:262px;border:1px solid #000;box-sizing:border-box;"></div>
<div class="t" style="left:654px;top:173.0px;line-height:16px;font-size:10.5px;color:#000;font-weight:normal;">Effilement:</div>
<div style="left:807px;top:170px;width:57px;height:19px;background:#d5cdbc;border-top:1px solid #000;border-left:1px solid #000;border-bottom:1px solid #f6f2ea;border-right:1px solid #f6f2ea;box-sizing:border-box;box-shadow:inset -1px -1px 0 #d5cdbc;"></div>
<div class="t" style="left:806.5px;width:57px;text-align:center;top:170.5px;line-height:16px;font-size:10.5px;color:#000;font-weight:normal;">0,400</div>
<div style="left:970px;top:170px;width:57px;height:19px;background:#d5cdbc;border-top:1px solid #000;border-left:1px solid #000;border-bottom:1px solid #f6f2ea;border-right:1px solid #f6f2ea;box-sizing:border-box;box-shadow:inset -1px -1px 0 #d5cdbc;"></div>
<div class="t" style="left:969.5px;width:57px;text-align:center;top:170.5px;line-height:16px;font-size:10.5px;color:#000;font-weight:normal;">0,400</div>
<div style="left:871px;top:174px;width:83px;height:1px;background:#000;"></div>
<div style="left:871px;top:175px;width:83px;height:1px;background:#f0ece2;"></div>
<div style="left:900px;top:168px;width:8px;height:15px;background:#dcd6ca;"></div>
<svg style="left:900px;top:167px;width:10px;height:19px" viewBox="0 0 10 19"><path d="M8.5 1 V13.5 L4.5 17.5" stroke="#000" fill="none" stroke-width="1.1"/></svg>
<div style="left:1034px;top:174px;width:83px;height:1px;background:#000;"></div>
<div style="left:1034px;top:175px;width:83px;height:1px;background:#f0ece2;"></div>
<div style="left:1063px;top:168px;width:8px;height:15px;background:#dcd6ca;"></div>
<svg style="left:1063px;top:167px;width:10px;height:19px" viewBox="0 0 10 19"><path d="M8.5 1 V13.5 L4.5 17.5" stroke="#000" fill="none" stroke-width="1.1"/></svg>
<div class="t" style="left:651px;top:200.3px;line-height:16px;font-size:10.5px;color:#000;font-weight:normal;">Corde à l'emplanture (cm)</div>
<div style="left:807px;top:196px;width:72px;height:19px;background:#d5cdbc;border-top:1px solid #000;border-left:1px solid #000;border-bottom:1px solid #f6f2ea;border-right:1px solid #f6f2ea;box-sizing:border-box;box-shadow:inset -1px -1px 0 #d5cdbc;"></div>
<div class="t" style="left:806.5px;width:72px;text-align:center;top:196.5px;line-height:16px;font-size:10.5px;color:#000;font-weight:normal;">21,5</div>
<div style="left:886px;top:196px;width:72px;height:19px;background:#d5cdbc;border-top:1px solid #000;border-left:1px solid #000;border-bottom:1px solid #f6f2ea;border-right:1px solid #f6f2ea;box-sizing:border-box;box-shadow:inset -1px -1px 0 #d5cdbc;"></div>
<div class="t" style="left:885.5px;width:72px;text-align:center;top:196.5px;line-height:16px;font-size:10.5px;color:#000;font-weight:normal;">215 mm</div>
<div style="left:970px;top:196px;width:72px;height:19px;background:#d5cdbc;border-top:1px solid #000;border-left:1px solid #000;border-bottom:1px solid #f6f2ea;border-right:1px solid #f6f2ea;box-sizing:border-box;box-shadow:inset -1px -1px 0 #d5cdbc;"></div>
<div class="t" style="left:969.5px;width:72px;text-align:center;top:196.5px;line-height:16px;font-size:10.5px;color:#000;font-weight:normal;">18,9</div>
<div style="left:1049px;top:196px;width:72px;height:19px;background:#d5cdbc;border-top:1px solid #000;border-left:1px solid #000;border-bottom:1px solid #f6f2ea;border-right:1px solid #f6f2ea;box-sizing:border-box;box-shadow:inset -1px -1px 0 #d5cdbc;"></div>
<div class="t" style="left:1048.5px;width:72px;text-align:center;top:196.5px;line-height:16px;font-size:10.5px;color:#000;font-weight:normal;">189 mm</div>
<div class="t" style="left:651px;top:226.3px;line-height:16px;font-size:10.5px;color:#000;font-weight:normal;">Corde au saumon (cm)</div>
<div style="left:807px;top:222px;width:72px;height:19px;background:#d5cdbc;border-top:1px solid #000;border-left:1px solid #000;border-bottom:1px solid #f6f2ea;border-right:1px solid #f6f2ea;box-sizing:border-box;box-shadow:inset -1px -1px 0 #d5cdbc;"></div>
<div class="t" style="left:806.5px;width:72px;text-align:center;top:222.5px;line-height:16px;font-size:10.5px;color:#000;font-weight:normal;">8,6</div>
<div style="left:886px;top:222px;width:72px;height:19px;background:#d5cdbc;border-top:1px solid #000;border-left:1px solid #000;border-bottom:1px solid #f6f2ea;border-right:1px solid #f6f2ea;box-sizing:border-box;box-shadow:inset -1px -1px 0 #d5cdbc;"></div>
<div class="t" style="left:885.5px;width:72px;text-align:center;top:222.5px;line-height:16px;font-size:10.5px;color:#000;font-weight:normal;">86 mm</div>
<div style="left:970px;top:222px;width:72px;height:19px;background:#d5cdbc;border-top:1px solid #000;border-left:1px solid #000;border-bottom:1px solid #f6f2ea;border-right:1px solid #f6f2ea;box-sizing:border-box;box-shadow:inset -1px -1px 0 #d5cdbc;"></div>
<div class="t" style="left:969.5px;width:72px;text-align:center;top:222.5px;line-height:16px;font-size:10.5px;color:#000;font-weight:normal;">7,6</div>
<div style="left:1049px;top:222px;width:72px;height:19px;background:#d5cdbc;border-top:1px solid #000;border-left:1px solid #000;border-bottom:1px solid #f6f2ea;border-right:1px solid #f6f2ea;box-sizing:border-box;box-shadow:inset -1px -1px 0 #d5cdbc;"></div>
<div class="t" style="left:1048.5px;width:72px;text-align:center;top:222.5px;line-height:16px;font-size:10.5px;color:#000;font-weight:normal;">76 mm</div>
<div class="t" style="left:651px;top:252.3px;line-height:16px;font-size:10.5px;color:#000;font-weight:normal;">Corde moyenne (cm)</div>
<div style="left:807px;top:248px;width:72px;height:19px;background:#d5cdbc;border-top:1px solid #000;border-left:1px solid #000;border-bottom:1px solid #f6f2ea;border-right:1px solid #f6f2ea;box-sizing:border-box;box-shadow:inset -1px -1px 0 #d5cdbc;"></div>
<div class="t" style="left:806.5px;width:72px;text-align:center;top:248.5px;line-height:16px;font-size:10.5px;color:#000;font-weight:normal;">16,0</div>
<div style="left:886px;top:248px;width:72px;height:19px;background:#d5cdbc;border-top:1px solid #000;border-left:1px solid #000;border-bottom:1px solid #f6f2ea;border-right:1px solid #f6f2ea;box-sizing:border-box;box-shadow:inset -1px -1px 0 #d5cdbc;"></div>
<div class="t" style="left:885.5px;width:72px;text-align:center;top:248.5px;line-height:16px;font-size:10.5px;color:#000;font-weight:normal;">160 mm</div>
<div style="left:970px;top:248px;width:72px;height:19px;background:#d5cdbc;border-top:1px solid #000;border-left:1px solid #000;border-bottom:1px solid #f6f2ea;border-right:1px solid #f6f2ea;box-sizing:border-box;box-shadow:inset -1px -1px 0 #d5cdbc;"></div>
<div class="t" style="left:969.5px;width:72px;text-align:center;top:248.5px;line-height:16px;font-size:10.5px;color:#000;font-weight:normal;">14,0</div>
<div style="left:1049px;top:248px;width:72px;height:19px;background:#d5cdbc;border-top:1px solid #000;border-left:1px solid #000;border-bottom:1px solid #f6f2ea;border-right:1px solid #f6f2ea;box-sizing:border-box;box-shadow:inset -1px -1px 0 #d5cdbc;"></div>
<div class="t" style="left:1048.5px;width:72px;text-align:center;top:248.5px;line-height:16px;font-size:10.5px;color:#000;font-weight:normal;">140 mm</div>
<div class="t" style="left:651px;top:278.3px;line-height:16px;font-size:10.5px;color:#000;font-weight:normal;">Allongement</div>
<div style="left:807px;top:274px;width:72px;height:19px;background:#2e8a58;border-top:1px solid #000;border-left:1px solid #000;border-bottom:1px solid #f6f2ea;border-right:1px solid #f6f2ea;box-sizing:border-box;box-shadow:inset -1px -1px 0 #d5cdbc;"></div>
<div class="t" style="left:806.5px;width:72px;text-align:center;top:274.5px;line-height:16px;font-size:10.5px;color:#fff;font-weight:normal;">10,1</div>
<div style="left:970px;top:274px;width:72px;height:19px;background:#ffff80;border-top:1px solid #000;border-left:1px solid #000;border-bottom:1px solid #f6f2ea;border-right:1px solid #f6f2ea;box-sizing:border-box;box-shadow:inset -1px -1px 0 #d5cdbc;"></div>
<div class="t" style="left:969.5px;width:72px;text-align:center;top:274.5px;line-height:16px;font-size:10.5px;color:#000;font-weight:normal;">11,5</div>
<div class="t" style="left:651px;top:304.3px;line-height:16px;font-size:10.5px;color:#000;font-weight:normal;">Surface (dm²)</div>
<div style="left:807px;top:300px;width:72px;height:19px;background:#d5cdbc;border-top:1px solid #000;border-left:1px solid #000;border-bottom:1px solid #f6f2ea;border-right:1px solid #f6f2ea;box-sizing:border-box;box-shadow:inset -1px -1px 0 #d5cdbc;"></div>
<div class="t" style="left:806.5px;width:72px;text-align:center;top:300.5px;line-height:16px;font-size:10.5px;color:#000;font-weight:normal;">22,88</div>
<div style="left:886px;top:300px;width:72px;height:19px;background:#d5cdbc;border-top:1px solid #000;border-left:1px solid #000;border-bottom:1px solid #f6f2ea;border-right:1px solid #f6f2ea;box-sizing:border-box;box-shadow:inset -1px -1px 0 #d5cdbc;"></div>
<div class="t" style="left:885.5px;width:72px;text-align:center;top:300.5px;line-height:16px;font-size:10.5px;color:#000;font-weight:normal;">0,2288 m²</div>
<div style="left:970px;top:300px;width:72px;height:19px;background:#d5cdbc;border-top:1px solid #000;border-left:1px solid #000;border-bottom:1px solid #f6f2ea;border-right:1px solid #f6f2ea;box-sizing:border-box;box-shadow:inset -1px -1px 0 #d5cdbc;"></div>
<div class="t" style="left:969.5px;width:72px;text-align:center;top:300.5px;line-height:16px;font-size:10.5px;color:#000;font-weight:normal;">20,09</div>
<div style="left:1049px;top:300px;width:72px;height:19px;background:#d5cdbc;border-top:1px solid #000;border-left:1px solid #000;border-bottom:1px solid #f6f2ea;border-right:1px solid #f6f2ea;box-sizing:border-box;box-shadow:inset -1px -1px 0 #d5cdbc;"></div>
<div class="t" style="left:1048.5px;width:72px;text-align:center;top:300.5px;line-height:16px;font-size:10.5px;color:#000;font-weight:normal;">0,2009 m²</div>
<div class="t" style="left:651px;top:330.3px;line-height:16px;font-size:10.5px;color:#000;font-weight:normal;">Re au saumon</div>
<div style="left:807px;top:326px;width:72px;height:19px;background:#d5cdbc;border-top:1px solid #000;border-left:1px solid #000;border-bottom:1px solid #f6f2ea;border-right:1px solid #f6f2ea;box-sizing:border-box;box-shadow:inset -1px -1px 0 #d5cdbc;"></div>
<div class="t" style="left:806.5px;width:72px;text-align:center;top:326.5px;line-height:16px;font-size:10.5px;color:#e01c1c;font-weight:normal;">66912</div>
<div style="left:970px;top:326px;width:72px;height:19px;background:#d5cdbc;border-top:1px solid #000;border-left:1px solid #000;border-bottom:1px solid #f6f2ea;border-right:1px solid #f6f2ea;box-sizing:border-box;box-shadow:inset -1px -1px 0 #d5cdbc;"></div>
<div class="t" style="left:969.5px;width:72px;text-align:center;top:326.5px;line-height:16px;font-size:10.5px;color:#e01c1c;font-weight:normal;">58753</div>
<div class="t" style="left:651px;top:356.3px;line-height:16px;font-size:10.5px;color:#000;font-weight:normal;">Re à l'emplanture</div>
<div style="left:807px;top:352px;width:72px;height:19px;background:#d5cdbc;border-top:1px solid #000;border-left:1px solid #000;border-bottom:1px solid #f6f2ea;border-right:1px solid #f6f2ea;box-sizing:border-box;box-shadow:inset -1px -1px 0 #d5cdbc;"></div>
<div class="t" style="left:806.5px;width:72px;text-align:center;top:352.5px;line-height:16px;font-size:10.5px;color:#1c1ce0;font-weight:normal;">167280</div>
<div style="left:970px;top:352px;width:72px;height:19px;background:#d5cdbc;border-top:1px solid #000;border-left:1px solid #000;border-bottom:1px solid #f6f2ea;border-right:1px solid #f6f2ea;box-sizing:border-box;box-shadow:inset -1px -1px 0 #d5cdbc;"></div>
<div class="t" style="left:969.5px;width:72px;text-align:center;top:352.5px;line-height:16px;font-size:10.5px;color:#1c1ce0;font-weight:normal;">146882</div>
<div class="t" style="left:651px;top:382.3px;line-height:16px;font-size:10.5px;color:#000;font-weight:normal;">Re moyen</div>
<div style="left:807px;top:378px;width:72px;height:19px;background:#d5cdbc;border-top:1px solid #000;border-left:1px solid #000;border-bottom:1px solid #f6f2ea;border-right:1px solid #f6f2ea;box-sizing:border-box;box-shadow:inset -1px -1px 0 #d5cdbc;"></div>
<div class="t" style="left:806.5px;width:72px;text-align:center;top:378.5px;line-height:16px;font-size:10.5px;color:#1e8c1e;font-weight:normal;">124265</div>
<div style="left:970px;top:378px;width:72px;height:19px;background:#d5cdbc;border-top:1px solid #000;border-left:1px solid #000;border-bottom:1px solid #f6f2ea;border-right:1px solid #f6f2ea;box-sizing:border-box;box-shadow:inset -1px -1px 0 #d5cdbc;"></div>
<div class="t" style="left:969.5px;width:72px;text-align:center;top:378.5px;line-height:16px;font-size:10.5px;color:#1e8c1e;font-weight:normal;">109112</div>
<div class="t" style="left:651px;top:404.8px;line-height:16px;font-size:10.5px;color:#000;font-weight:normal;">Foyer du profil (cm)</div>
<div style="left:807px;top:404px;width:72px;height:19px;background:#fde0c0;border-top:1px solid #000;border-left:1px solid #000;border-bottom:1px solid #f6f2ea;border-right:1px solid #f6f2ea;box-sizing:border-box;box-shadow:inset -1px -1px 0 #d5cdbc;"></div>
<div class="t" style="left:806.5px;width:72px;text-align:center;top:404.5px;line-height:16px;font-size:10.5px;color:#000;font-weight:normal;">3,99</div>
<div style="left:886px;top:404px;width:72px;height:19px;background:#fde0c0;border-top:1px solid #000;border-left:1px solid #000;border-bottom:1px solid #f6f2ea;border-right:1px solid #f6f2ea;box-sizing:border-box;box-shadow:inset -1px -1px 0 #d5cdbc;"></div>
<div class="t" style="left:885.5px;width:72px;text-align:center;top:404.5px;line-height:16px;font-size:10.5px;color:#000;font-weight:normal;">39,9 mm</div>
<div style="left:970px;top:404px;width:72px;height:19px;background:#fde0c0;border-top:1px solid #000;border-left:1px solid #000;border-bottom:1px solid #f6f2ea;border-right:1px solid #f6f2ea;box-sizing:border-box;box-shadow:inset -1px -1px 0 #d5cdbc;"></div>
<div class="t" style="left:969.5px;width:72px;text-align:center;top:404.5px;line-height:16px;font-size:10.5px;color:#000;font-weight:normal;">3,51</div>
<div style="left:1049px;top:404px;width:72px;height:19px;background:#fde0c0;border-top:1px solid #000;border-left:1px solid #000;border-bottom:1px solid #f6f2ea;border-right:1px solid #f6f2ea;box-sizing:border-box;box-shadow:inset -1px -1px 0 #d5cdbc;"></div>
<div class="t" style="left:1048.5px;width:72px;text-align:center;top:404.5px;line-height:16px;font-size:10.5px;color:#000;font-weight:normal;">35,1 mm</div>
<div style="left:35px;top:603px;width:520px;height:401px;border-top:1px solid #f6f3ec;border-left:1px solid #f6f3ec;border-right:1px solid #000;border-bottom:1px solid #000;box-sizing:border-box;"></div>
<div style="left:35px;top:583px;width:46px;height:21px;background:#d5cdbc;border-top:1px solid #f6f3ec;border-left:1px solid #f6f3ec;border-right:1px solid #000;box-sizing:border-box;"></div>
<div class="t" style="left:43px;top:584.0px;line-height:16px;font-size:10.5px;color:#000;font-weight:normal;">Aile</div>
<div style="left:81px;top:585px;width:87px;height:18px;background:#d5cdbc;border-top:1px solid #f6f3ec;border-right:1px solid #000;box-sizing:border-box;"></div>
<div class="t" style="left:86px;top:586.3px;line-height:16px;font-size:10.5px;color:#000;font-weight:normal;">Résultats Divers</div>
<svg style="left:0;top:0;width:1164px;height:1028px" viewBox="0 0 1164 1028" font-family="Liberation Sans, sans-serif"><rect x="347" y="164" width="290" height="76" fill="#000"/><rect x="45" y="610" width="500" height="384" fill="#e2ded4"/><rect x="45" y="610" width="500" height="200" fill="#000"/><rect x="45" y="814" width="249" height="180" fill="#000"/><rect x="296" y="814" width="249" height="180" fill="#000"/><rect x="643" y="429" width="500" height="572" fill="#e2ded4"/><rect x="643" y="429" width="500" height="200" fill="#000"/><rect x="643" y="630" width="249" height="190" fill="#000"/><rect x="894" y="630" width="249" height="190" fill="#000"/><rect x="643" y="821" width="249" height="180" fill="#000"/><rect x="894" y="821" width="249" height="180" fill="#000"/><text x="359.0" y="174.2" fill="#c4c4c4" font-size="9" text-anchor="start" font-weight="normal">MG06</text><path d="M357.00,202.50 C357.50,201.78 358.67,199.38 360.00,198.20 C361.33,197.02 363.00,196.18 365.00,195.40 C367.00,194.62 369.50,193.98 372.00,193.50 C374.50,193.02 375.33,192.90 380.00,192.50 C384.67,192.10 393.00,191.42 400.00,191.10 C407.00,190.78 414.50,190.52 422.00,190.60 C429.50,190.68 437.83,191.13 445.00,191.60 C452.17,192.07 455.83,192.43 465.00,193.40 C474.17,194.37 487.50,195.67 500.00,197.40 C512.50,199.13 526.67,201.65 540.00,203.80 C553.33,205.95 565.50,208.10 580.00,210.30 C594.50,212.50 627.00,216.17 627.00,217.00 C627.00,217.83 594.50,215.78 580.00,215.30 C565.50,214.82 553.33,214.45 540.00,214.10 C526.67,213.75 512.50,213.52 500.00,213.20 C487.50,212.88 478.00,212.58 465.00,212.20 C452.00,211.82 436.17,211.63 422.00,210.90 C407.83,210.17 388.67,208.45 380.00,207.80 C371.33,207.15 373.00,207.43 370.00,207.00 C367.00,206.57 364.17,205.95 362.00,205.20 C359.83,204.45 357.83,202.95 357.00,202.50" stroke="#0c400c" stroke-width="3.2" fill="none" stroke-linejoin="round" /><path d="M357.00,202.50 C357.50,201.78 358.67,199.38 360.00,198.20 C361.33,197.02 363.00,196.18 365.00,195.40 C367.00,194.62 369.50,193.98 372.00,193.50 C374.50,193.02 375.33,192.90 380.00,192.50 C384.67,192.10 393.00,191.42 400.00,191.10 C407.00,190.78 414.50,190.52 422.00,190.60 C429.50,190.68 437.83,191.13 445.00,191.60 C452.17,192.07 455.83,192.43 465.00,193.40 C474.17,194.37 487.50,195.67 500.00,197.40 C512.50,199.13 526.67,201.65 540.00,203.80 C553.33,205.95 565.50,208.10 580.00,210.30 C594.50,212.50 627.00,216.17 627.00,217.00 C627.00,217.83 594.50,215.78 580.00,215.30 C565.50,214.82 553.33,214.45 540.00,214.10 C526.67,213.75 512.50,213.52 500.00,213.20 C487.50,212.88 478.00,212.58 465.00,212.20 C452.00,211.82 436.17,211.63 422.00,210.90 C407.83,210.17 388.67,208.45 380.00,207.80 C371.33,207.15 373.00,207.43 370.00,207.00 C367.00,206.57 364.17,205.95 362.00,205.20 C359.83,204.45 357.83,202.95 357.00,202.50" stroke="#44cc34" stroke-width="1.4" fill="none" stroke-linejoin="round" /><rect x="365" y="202" width="5" height="1" fill="#a8a8a8"/><rect x="375" y="202" width="5" height="1" fill="#a8a8a8"/><rect x="385" y="202" width="5" height="1" fill="#a8a8a8"/><rect x="395" y="202" width="5" height="1" fill="#a8a8a8"/><rect x="405" y="202" width="5" height="1" fill="#a8a8a8"/><rect x="415" y="202" width="5" height="1" fill="#a8a8a8"/><rect x="425" y="202" width="5" height="1" fill="#a8a8a8"/><rect x="435" y="202" width="5" height="1" fill="#a8a8a8"/><rect x="445" y="202" width="5" height="1" fill="#a8a8a8"/><rect x="455" y="202" width="5" height="1" fill="#a8a8a8"/><rect x="465" y="202" width="5" height="1" fill="#a8a8a8"/><rect x="475" y="202" width="5" height="1" fill="#a8a8a8"/><rect x="485" y="202" width="5" height="1" fill="#a8a8a8"/><rect x="495" y="202" width="5" height="1" fill="#a8a8a8"/><rect x="505" y="202" width="5" height="1" fill="#a8a8a8"/><rect x="515" y="202" width="5" height="1" fill="#a8a8a8"/><rect x="525" y="202" width="5" height="1" fill="#a8a8a8"/><rect x="535" y="202" width="5" height="1" fill="#a8a8a8"/><rect x="545" y="202" width="5" height="1" fill="#a8a8a8"/><rect x="555" y="202" width="5" height="1" fill="#a8a8a8"/><rect x="565" y="202" width="5" height="1" fill="#a8a8a8"/><rect x="575" y="202" width="5" height="1" fill="#a8a8a8"/><rect x="585" y="202" width="5" height="1" fill="#a8a8a8"/><rect x="595" y="202" width="5" height="1" fill="#a8a8a8"/><rect x="605" y="202" width="5" height="1" fill="#a8a8a8"/><rect x="615" y="202" width="5" height="1" fill="#a8a8a8"/><polyline points="366.0,203.3 380.0,203.9 422.0,205.2 465.0,207.0 500.0,209.6 540.0,211.2 580.0,213.0 606.0,214.2" stroke="#78b040" stroke-width="1.5" fill="none" stroke-linejoin="round" stroke-dasharray="5 5"/><text x="359.0" y="229.2" fill="#c4c4c4" font-size="9" text-anchor="start" font-weight="normal">Epaisseur max de 7,39% à 23,90%</text><text x="359.0" y="238.7" fill="#c4c4c4" font-size="9" text-anchor="start" font-weight="normal">Cambrure max de 1,93% à 31,10%</text><text x="57.0" y="620.2" fill="#5e5e5e" font-size="9" text-anchor="start" font-weight="normal">Ailes elliptiques</text><rect x="55" y="710" width="481" height="1" fill="#8c8c8c"/><rect x="295" y="620" width="1" height="181" fill="#8c8c8c"/><rect x="55" y="707" width="1" height="8" fill="#8c8c8c"/><rect x="79" y="707" width="1" height="8" fill="#8c8c8c"/><rect x="103" y="707" width="1" height="8" fill="#8c8c8c"/><rect x="127" y="707" width="1" height="8" fill="#8c8c8c"/><rect x="151" y="707" width="1" height="8" fill="#8c8c8c"/><rect x="175" y="707" width="1" height="8" fill="#8c8c8c"/><rect x="199" y="707" width="1" height="8" fill="#8c8c8c"/><rect x="223" y="707" width="1" height="8" fill="#8c8c8c"/><rect x="247" y="707" width="1" height="8" fill="#8c8c8c"/><rect x="271" y="707" width="1" height="8" fill="#8c8c8c"/><rect x="319" y="707" width="1" height="8" fill="#8c8c8c"/><rect x="343" y="707" width="1" height="8" fill="#8c8c8c"/><rect x="367" y="707" width="1" height="8" fill="#8c8c8c"/><rect x="391" y="707" width="1" height="8" fill="#8c8c8c"/><rect x="415" y="707" width="1" height="8" fill="#8c8c8c"/><rect x="439" y="707" width="1" height="8" fill="#8c8c8c"/><rect x="463" y="707" width="1" height="8" fill="#8c8c8c"/><rect x="487" y="707" width="1" height="8" fill="#8c8c8c"/><rect x="511" y="707" width="1" height="8" fill="#8c8c8c"/><rect x="535" y="707" width="1" height="8" fill="#8c8c8c"/><rect x="292" y="630" width="8" height="1" fill="#8c8c8c"/><rect x="292" y="646" width="8" height="1" fill="#8c8c8c"/><rect x="292" y="662" width="8" height="1" fill="#8c8c8c"/><rect x="292" y="678" width="8" height="1" fill="#8c8c8c"/><rect x="292" y="694" width="8" height="1" fill="#8c8c8c"/><rect x="292" y="726" width="8" height="1" fill="#8c8c8c"/><rect x="292" y="742" width="8" height="1" fill="#8c8c8c"/><rect x="292" y="758" width="8" height="1" fill="#8c8c8c"/><rect x="292" y="774" width="8" height="1" fill="#8c8c8c"/><rect x="292" y="790" width="8" height="1" fill="#8c8c8c"/><text x="53.8" y="721.7" fill="#909090" font-size="8.6" text-anchor="middle" font-weight="normal">-76,0</text><text x="101.8" y="721.7" fill="#909090" font-size="8.6" text-anchor="middle" font-weight="normal">-60,8</text><text x="149.8" y="721.7" fill="#909090" font-size="8.6" text-anchor="middle" font-weight="normal">-45,6</text><text x="197.8" y="721.7" fill="#909090" font-size="8.6" text-anchor="middle" font-weight="normal">-30,4</text><text x="245.8" y="721.7" fill="#909090" font-size="8.6" text-anchor="middle" font-weight="normal">-15,2</text><text x="343.0" y="721.7" fill="#909090" font-size="8.6" text-anchor="middle" font-weight="normal">15,2</text><text x="391.0" y="721.7" fill="#909090" font-size="8.6" text-anchor="middle" font-weight="normal">30,4</text><text x="439.0" y="721.7" fill="#909090" font-size="8.6" text-anchor="middle" font-weight="normal">45,6</text><text x="487.0" y="721.7" fill="#909090" font-size="8.6" text-anchor="middle" font-weight="normal">60,8</text><text x="535.0" y="721.7" fill="#909090" font-size="8.6" text-anchor="middle" font-weight="normal">76,0</text><text x="290.0" y="649.6" fill="#909090" font-size="8.6" text-anchor="end" font-weight="normal">20,0</text><text x="290.0" y="681.6" fill="#909090" font-size="8.6" text-anchor="end" font-weight="normal">10,0</text><text x="290.0" y="745.6" fill="#909090" font-size="8.6" text-anchor="end" font-weight="normal">-10,0</text><text x="290.0" y="777.6" fill="#909090" font-size="8.6" text-anchor="end" font-weight="normal">-20,0</text><text x="298.0" y="630.7" fill="#909090" font-size="9" text-anchor="start" font-weight="normal">Corde (cm)</text><text x="470.5" y="709.2" fill="#909090" font-size="9" text-anchor="start" font-weight="normal">Envergure (cm)</text><ellipse cx="295.5" cy="710.5" rx="240" ry="29.5" stroke="#1f8a1f" stroke-width="1.7" fill="none"/><ellipse cx="295.5" cy="710.7" rx="240" ry="26.4" stroke="#e6e25a" stroke-width="1.2" fill="none"/><rect x="175" y="694" width="6" height="1" fill="#5a8a20"/><rect x="185" y="694" width="6" height="1" fill="#5a8a20"/><rect x="195" y="694" width="6" height="1" fill="#5a8a20"/><rect x="205" y="694" width="6" height="1" fill="#5a8a20"/><rect x="215" y="694" width="6" height="1" fill="#5a8a20"/><rect x="225" y="694" width="6" height="1" fill="#5a8a20"/><rect x="235" y="694" width="6" height="1" fill="#5a8a20"/><rect x="245" y="694" width="6" height="1" fill="#5a8a20"/><rect x="255" y="694" width="6" height="1" fill="#5a8a20"/><rect x="265" y="694" width="6" height="1" fill="#5a8a20"/><rect x="275" y="694" width="6" height="1" fill="#5a8a20"/><rect x="285" y="694" width="6" height="1" fill="#5a8a20"/><rect x="295" y="694" width="6" height="1" fill="#5a8a20"/><rect x="305" y="694" width="6" height="1" fill="#5a8a20"/><rect x="315" y="694" width="6" height="1" fill="#5a8a20"/><rect x="325" y="694" width="6" height="1" fill="#5a8a20"/><rect x="335" y="694" width="6" height="1" fill="#5a8a20"/><rect x="345" y="694" width="6" height="1" fill="#5a8a20"/><rect x="355" y="694" width="6" height="1" fill="#5a8a20"/><rect x="365" y="694" width="6" height="1" fill="#5a8a20"/><rect x="375" y="694" width="6" height="1" fill="#5a8a20"/><rect x="385" y="694" width="6" height="1" fill="#5a8a20"/><rect x="395" y="694" width="6" height="1" fill="#5a8a20"/><rect x="405" y="694" width="6" height="1" fill="#5a8a20"/><rect x="175" y="695" width="6" height="1" fill="#e0e850"/><rect x="185" y="695" width="6" height="1" fill="#e0e850"/><rect x="195" y="695" width="6" height="1" fill="#e0e850"/><rect x="205" y="695" width="6" height="1" fill="#e0e850"/><rect x="215" y="695" width="6" height="1" fill="#e0e850"/><rect x="225" y="695" width="6" height="1" fill="#e0e850"/><rect x="235" y="695" width="6" height="1" fill="#e0e850"/><rect x="245" y="695" width="6" height="1" fill="#e0e850"/><rect x="255" y="695" width="6" height="1" fill="#e0e850"/><rect x="265" y="695" width="6" height="1" fill="#e0e850"/><rect x="275" y="695" width="6" height="1" fill="#e0e850"/><rect x="285" y="695" width="6" height="1" fill="#e0e850"/><rect x="295" y="695" width="6" height="1" fill="#e0e850"/><rect x="305" y="695" width="6" height="1" fill="#e0e850"/><rect x="315" y="695" width="6" height="1" fill="#e0e850"/><rect x="325" y="695" width="6" height="1" fill="#e0e850"/><rect x="335" y="695" width="6" height="1" fill="#e0e850"/><rect x="345" y="695" width="6" height="1" fill="#e0e850"/><rect x="355" y="695" width="6" height="1" fill="#e0e850"/><rect x="365" y="695" width="6" height="1" fill="#e0e850"/><rect x="375" y="695" width="6" height="1" fill="#e0e850"/><rect x="385" y="695" width="6" height="1" fill="#e0e850"/><rect x="395" y="695" width="6" height="1" fill="#e0e850"/><rect x="405" y="695" width="6" height="1" fill="#e0e850"/><text x="655.0" y="439.2" fill="#5e5e5e" font-size="9" text-anchor="start" font-weight="normal">Ailes trapèzes</text><rect x="653" y="529" width="481" height="1" fill="#8c8c8c"/><rect x="893" y="440" width="1" height="182" fill="#8c8c8c"/><rect x="653" y="526" width="1" height="8" fill="#8c8c8c"/><rect x="677" y="526" width="1" height="8" fill="#8c8c8c"/><rect x="701" y="526" width="1" height="8" fill="#8c8c8c"/><rect x="725" y="526" width="1" height="8" fill="#8c8c8c"/><rect x="749" y="526" width="1" height="8" fill="#8c8c8c"/><rect x="773" y="526" width="1" height="8" fill="#8c8c8c"/><rect x="797" y="526" width="1" height="8" fill="#8c8c8c"/><rect x="821" y="526" width="1" height="8" fill="#8c8c8c"/><rect x="845" y="526" width="1" height="8" fill="#8c8c8c"/><rect x="869" y="526" width="1" height="8" fill="#8c8c8c"/><rect x="917" y="526" width="1" height="8" fill="#8c8c8c"/><rect x="941" y="526" width="1" height="8" fill="#8c8c8c"/><rect x="965" y="526" width="1" height="8" fill="#8c8c8c"/><rect x="989" y="526" width="1" height="8" fill="#8c8c8c"/><rect x="1013" y="526" width="1" height="8" fill="#8c8c8c"/><rect x="1037" y="526" width="1" height="8" fill="#8c8c8c"/><rect x="1061" y="526" width="1" height="8" fill="#8c8c8c"/><rect x="1085" y="526" width="1" height="8" fill="#8c8c8c"/><rect x="1109" y="526" width="1" height="8" fill="#8c8c8c"/><rect x="1133" y="526" width="1" height="8" fill="#8c8c8c"/><rect x="890" y="449" width="8" height="1" fill="#8c8c8c"/><rect x="890" y="465" width="8" height="1" fill="#8c8c8c"/><rect x="890" y="481" width="8" height="1" fill="#8c8c8c"/><rect x="890" y="497" width="8" height="1" fill="#8c8c8c"/><rect x="890" y="513" width="8" height="1" fill="#8c8c8c"/><rect x="890" y="545" width="8" height="1" fill="#8c8c8c"/><rect x="890" y="561" width="8" height="1" fill="#8c8c8c"/><rect x="890" y="577" width="8" height="1" fill="#8c8c8c"/><rect x="890" y="593" width="8" height="1" fill="#8c8c8c"/><rect x="890" y="609" width="8" height="1" fill="#8c8c8c"/><text x="651.8" y="540.7" fill="#909090" font-size="8.6" text-anchor="middle" font-weight="normal">-76,0</text><text x="699.8" y="540.7" fill="#909090" font-size="8.6" text-anchor="middle" font-weight="normal">-60,8</text><text x="747.8" y="540.7" fill="#909090" font-size="8.6" text-anchor="middle" font-weight="normal">-45,6</text><text x="795.8" y="540.7" fill="#909090" font-size="8.6" text-anchor="middle" font-weight="normal">-30,4</text><text x="843.8" y="540.7" fill="#909090" font-size="8.6" text-anchor="middle" font-weight="normal">-15,2</text><text x="941.0" y="540.7" fill="#909090" font-size="8.6" text-anchor="middle" font-weight="normal">15,2</text><text x="989.0" y="540.7" fill="#909090" font-size="8.6" text-anchor="middle" font-weight="normal">30,4</text><text x="1037.0" y="540.7" fill="#909090" font-size="8.6" text-anchor="middle" font-weight="normal">45,6</text><text x="1085.0" y="540.7" fill="#909090" font-size="8.6" text-anchor="middle" font-weight="normal">60,8</text><text x="1133.0" y="540.7" fill="#909090" font-size="8.6" text-anchor="middle" font-weight="normal">76,0</text><text x="888.0" y="468.6" fill="#909090" font-size="8.6" text-anchor="end" font-weight="normal">20,0</text><text x="888.0" y="500.6" fill="#909090" font-size="8.6" text-anchor="end" font-weight="normal">10,0</text><text x="888.0" y="564.6" fill="#909090" font-size="8.6" text-anchor="end" font-weight="normal">-10,0</text><text x="888.0" y="596.6" fill="#909090" font-size="8.6" text-anchor="end" font-weight="normal">-20,0</text><text x="896.0" y="448.7" fill="#909090" font-size="9" text-anchor="start" font-weight="normal">Corde (cm)</text><text x="1068.0" y="527.2" fill="#909090" font-size="9" text-anchor="start" font-weight="normal">Envergure (cm)</text><polyline points="653.5,496.5 1133.5,496.5 1133.5,523.4 893.5,562.0 653.5,523.4 653.5,496.5" stroke="#1f8a1f" stroke-width="1.3" fill="none" stroke-linejoin="round" /><rect x="653" y="500" width="481" height="1" fill="#e6e25a"/><polyline points="653.5,523.4 893.5,559.3 1133.5,523.4" stroke="#e6e25a" stroke-width="1.3" fill="none" stroke-linejoin="round" /><rect x="773" y="508" width="6" height="1" fill="#2c5016"/><rect x="783" y="508" width="6" height="1" fill="#2c5016"/><rect x="793" y="508" width="6" height="1" fill="#2c5016"/><rect x="803" y="508" width="6" height="1" fill="#2c5016"/><rect x="813" y="508" width="6" height="1" fill="#2c5016"/><rect x="823" y="508" width="6" height="1" fill="#2c5016"/><rect x="833" y="508" width="6" height="1" fill="#2c5016"/><rect x="843" y="508" width="6" height="1" fill="#2c5016"/><rect x="853" y="508" width="6" height="1" fill="#2c5016"/><rect x="863" y="508" width="6" height="1" fill="#2c5016"/><rect x="873" y="508" width="6" height="1" fill="#2c5016"/><rect x="883" y="508" width="6" height="1" fill="#2c5016"/><rect x="893" y="508" width="6" height="1" fill="#2c5016"/><rect x="903" y="508" width="6" height="1" fill="#2c5016"/><rect x="913" y="508" width="6" height="1" fill="#2c5016"/><rect x="923" y="508" width="6" height="1" fill="#2c5016"/><rect x="933" y="508" width="6" height="1" fill="#2c5016"/><rect x="943" y="508" width="6" height="1" fill="#2c5016"/><rect x="953" y="508" width="6" height="1" fill="#2c5016"/><rect x="963" y="508" width="6" height="1" fill="#2c5016"/><rect x="973" y="508" width="6" height="1" fill="#2c5016"/><rect x="983" y="508" width="6" height="1" fill="#2c5016"/><rect x="993" y="508" width="6" height="1" fill="#2c5016"/><rect x="1003" y="508" width="6" height="1" fill="#2c5016"/><rect x="773" y="510" width="6" height="2" fill="#e0e050"/><rect x="783" y="510" width="6" height="2" fill="#e0e050"/><rect x="793" y="510" width="6" height="2" fill="#e0e050"/><rect x="803" y="510" width="6" height="2" fill="#e0e050"/><rect x="813" y="510" width="6" height="2" fill="#e0e050"/><rect x="823" y="510" width="6" height="2" fill="#e0e050"/><rect x="833" y="510" width="6" height="2" fill="#e0e050"/><rect x="843" y="510" width="6" height="2" fill="#e0e050"/><rect x="853" y="510" width="6" height="2" fill="#e0e050"/><rect x="863" y="510" width="6" height="2" fill="#e0e050"/><rect x="873" y="510" width="6" height="2" fill="#e0e050"/><rect x="883" y="510" width="6" height="2" fill="#e0e050"/><rect x="893" y="510" width="6" height="2" fill="#e0e050"/><rect x="903" y="510" width="6" height="2" fill="#e0e050"/><rect x="913" y="510" width="6" height="2" fill="#e0e050"/><rect x="923" y="510" width="6" height="2" fill="#e0e050"/><rect x="933" y="510" width="6" height="2" fill="#e0e050"/><rect x="943" y="510" width="6" height="2" fill="#e0e050"/><rect x="953" y="510" width="6" height="2" fill="#e0e050"/><rect x="963" y="510" width="6" height="2" fill="#e0e050"/><rect x="973" y="510" width="6" height="2" fill="#e0e050"/><rect x="983" y="510" width="6" height="2" fill="#e0e050"/><rect x="993" y="510" width="6" height="2" fill="#e0e050"/><rect x="1003" y="510" width="6" height="2" fill="#e0e050"/><text x="68.0" y="824.2" fill="#2aa02a" font-size="9" text-anchor="start" font-weight="normal">Cz</text><text x="120.0" y="824.2" fill="#5e5e5e" font-size="9" text-anchor="start" font-weight="normal">Répartitions de portance</text><text x="243.0" y="824.2" fill="#e01c1c" font-size="9" text-anchor="start" font-weight="normal">Cordes</text><rect x="65" y="834" width="1" height="141" fill="#8c8c8c"/><rect x="65" y="974" width="211" height="1" fill="#8c8c8c"/><rect x="86" y="971" width="1" height="7" fill="#8c8c8c"/><rect x="107" y="971" width="1" height="7" fill="#8c8c8c"/><rect x="128" y="971" width="1" height="7" fill="#8c8c8c"/><rect x="149" y="971" width="1" height="7" fill="#8c8c8c"/><rect x="170" y="971" width="1" height="7" fill="#8c8c8c"/><rect x="191" y="971" width="1" height="7" fill="#8c8c8c"/><rect x="212" y="971" width="1" height="7" fill="#8c8c8c"/><rect x="233" y="971" width="1" height="7" fill="#8c8c8c"/><rect x="254" y="971" width="1" height="7" fill="#8c8c8c"/><rect x="275" y="971" width="1" height="7" fill="#8c8c8c"/><text x="52.0" y="873.6" fill="#909090" font-size="8.6" text-anchor="middle" font-weight="normal">100</text><text x="170.5" y="986.6" fill="#909090" font-size="8.6" text-anchor="middle" font-weight="normal">50</text><text x="275.5" y="986.6" fill="#909090" font-size="8.6" text-anchor="middle" font-weight="normal">100</text><polyline points="65.5,870.5 66.0,870.5 66.5,870.5 67.1,870.5 67.6,870.5 68.1,870.5 68.6,870.5 69.2,870.5 69.7,870.5 70.2,870.5 70.7,870.5 71.3,870.5 71.8,870.5 72.3,870.6 72.8,870.6 73.3,870.6 73.9,870.6 74.4,870.6 74.9,870.6 75.4,870.6 76.0,870.6 76.5,870.6 77.0,870.7 77.5,870.7 78.0,870.7 78.6,870.7 79.1,870.7 79.6,870.7 80.1,870.8 80.7,870.8 81.2,870.8 81.7,870.8 82.2,870.8 82.8,870.9 83.3,870.9 83.8,870.9 84.3,870.9 84.8,870.9 85.4,871.0 85.9,871.0 86.4,871.0 86.9,871.1 87.5,871.1 88.0,871.1 88.5,871.1 89.0,871.2 89.5,871.2 90.1,871.2 90.6,871.3 91.1,871.3 91.6,871.3 92.2,871.4 92.7,871.4 93.2,871.4 93.7,871.5 94.3,871.5 94.8,871.5 95.3,871.6 95.8,871.6 96.3,871.6 96.9,871.7 97.4,871.7 97.9,871.8 98.4,871.8 99.0,871.8 99.5,871.9 100.0,871.9 100.5,872.0 101.0,872.0 101.6,872.1 102.1,872.1 102.6,872.2 103.1,872.2 103.7,872.3 104.2,872.3 104.7,872.4 105.2,872.4 105.8,872.5 106.3,872.5 106.8,872.6 107.3,872.6 107.8,872.7 108.4,872.7 108.9,872.8 109.4,872.8 109.9,872.9 110.5,872.9 111.0,873.0 111.5,873.1 112.0,873.1 112.5,873.2 113.1,873.2 113.6,873.3 114.1,873.4 114.6,873.4 115.2,873.5 115.7,873.6 116.2,873.6 116.7,873.7 117.3,873.8 117.8,873.8 118.3,873.9 118.8,874.0 119.3,874.0 119.9,874.1 120.4,874.2 120.9,874.2 121.4,874.3 122.0,874.4 122.5,874.5 123.0,874.5 123.5,874.6 124.0,874.7 124.6,874.8 125.1,874.8 125.6,874.9 126.1,875.0 126.7,875.1 127.2,875.2 127.7,875.2 128.2,875.3 128.8,875.4 129.3,875.5 129.8,875.6 130.3,875.6 130.8,875.7 131.4,875.8 131.9,875.9 132.4,876.0 132.9,876.1 133.5,876.2 134.0,876.3 134.5,876.4 135.0,876.4 135.5,876.5 136.1,876.6 136.6,876.7 137.1,876.8 137.6,876.9 138.2,877.0 138.7,877.1 139.2,877.2 139.7,877.3 140.3,877.4 140.8,877.5 141.3,877.6 141.8,877.7 142.3,877.8 142.9,877.9 143.4,878.0 143.9,878.1 144.4,878.2 145.0,878.3 145.5,878.4 146.0,878.6 146.5,878.7 147.0,878.8 147.6,878.9 148.1,879.0 148.6,879.1 149.1,879.2 149.7,879.3 150.2,879.5 150.7,879.6 151.2,879.7 151.8,879.8 152.3,879.9 152.8,880.0 153.3,880.2 153.8,880.3 154.4,880.4 154.9,880.5 155.4,880.7 155.9,880.8 156.5,880.9 157.0,881.0 157.5,881.2 158.0,881.3 158.5,881.4 159.1,881.5 159.6,881.7 160.1,881.8 160.6,881.9 161.2,882.1 161.7,882.2 162.2,882.3 162.7,882.5 163.3,882.6 163.8,882.8 164.3,882.9 164.8,883.0 165.3,883.2 165.9,883.3 166.4,883.5 166.9,883.6 167.4,883.8 168.0,883.9 168.5,884.1 169.0,884.2 169.5,884.4 170.1,884.5 170.6,884.7 171.1,884.8 171.6,885.0 172.1,885.1 172.7,885.3 173.2,885.4 173.7,885.6 174.2,885.7 174.8,885.9 175.3,886.1 175.8,886.2 176.3,886.4 176.8,886.5 177.4,886.7 177.9,886.9 178.4,887.0 178.9,887.2 179.5,887.4 180.0,887.6 180.5,887.7 181.0,887.9 181.6,888.1 182.1,888.2 182.6,888.4 183.1,888.6 183.6,888.8 184.2,889.0 184.7,889.1 185.2,889.3 185.7,889.5 186.3,889.7 186.8,889.9 187.3,890.1 187.8,890.2 188.3,890.4 188.9,890.6 189.4,890.8 189.9,891.0 190.4,891.2 191.0,891.4 191.5,891.6 192.0,891.8 192.5,892.0 193.1,892.2 193.6,892.4 194.1,892.6 194.6,892.8 195.1,893.0 195.7,893.2 196.2,893.4 196.7,893.6 197.2,893.8 197.8,894.1 198.3,894.3 198.8,894.5 199.3,894.7 199.8,894.9 200.4,895.1 200.9,895.4 201.4,895.6 201.9,895.8 202.5,896.0 203.0,896.3 203.5,896.5 204.0,896.7 204.6,897.0 205.1,897.2 205.6,897.4 206.1,897.7 206.6,897.9 207.2,898.1 207.7,898.4 208.2,898.6 208.7,898.9 209.3,899.1 209.8,899.4 210.3,899.6 210.8,899.9 211.3,900.1 211.9,900.4 212.4,900.6 212.9,900.9 213.4,901.1 214.0,901.4 214.5,901.7 215.0,901.9 215.5,902.2 216.1,902.5 216.6,902.8 217.1,903.0 217.6,903.3 218.1,903.6 218.7,903.9 219.2,904.1 219.7,904.4 220.2,904.7 220.8,905.0 221.3,905.3 221.8,905.6 222.3,905.9 222.8,906.2 223.4,906.5 223.9,906.8 224.4,907.1 224.9,907.4 225.5,907.7 226.0,908.0 226.5,908.3 227.0,908.6 227.6,909.0 228.1,909.3 228.6,909.6 229.1,909.9 229.6,910.3 230.2,910.6 230.7,910.9 231.2,911.3 231.7,911.6 232.3,912.0 232.8,912.3 233.3,912.6 233.8,913.0 234.3,913.4 234.9,913.7 235.4,914.1 235.9,914.4 236.4,914.8 237.0,915.2 237.5,915.6 238.0,915.9 238.5,916.3 239.1,916.7 239.6,917.1 240.1,917.5 240.6,917.9 241.1,918.3 241.7,918.7 242.2,919.1 242.7,919.5 243.2,920.0 243.8,920.4 244.3,920.8 244.8,921.2 245.3,921.7 245.8,922.1 246.4,922.6 246.9,923.0 247.4,923.5 247.9,923.9 248.5,924.4 249.0,924.9 249.5,925.4 250.0,925.9 250.6,926.3 251.1,926.8 251.6,927.4 252.1,927.9 252.6,928.4 253.2,928.9 253.7,929.4 254.2,930.0 254.7,930.5 255.3,931.1 255.8,931.7 256.3,932.3 256.8,932.8 257.3,933.4 257.9,934.0 258.4,934.7 258.9,935.3 259.4,935.9 260.0,936.6 260.5,937.3 261.0,937.9 261.5,938.6 262.1,939.3 262.6,940.1 263.1,940.8 263.6,941.6 264.1,942.4 264.7,943.2 265.2,944.0 265.7,944.9 266.2,945.7 266.8,946.7 267.3,947.6 267.8,948.6 268.3,949.6 268.8,950.7 269.4,951.8 269.9,953.0 270.4,954.2 270.9,955.5 271.5,957.0 272.0,958.5 272.5,960.3 273.0,962.2 273.6,964.6" stroke="#c81a28" stroke-width="1.3" fill="none" stroke-linejoin="round" /><path d="M65.50,870.50 C76.35,870.47 108.93,870.55 130.60,870.30 C152.27,870.05 179.27,869.48 195.50,869.00 C211.73,868.52 218.97,868.13 228.00,867.40 C237.03,866.67 244.28,865.53 249.70,864.60 C255.12,863.67 257.87,862.45 260.50,861.80 C263.13,861.15 264.17,860.58 265.50,860.70 C266.83,860.82 267.67,860.62 268.50,862.50 C269.33,864.38 269.92,866.58 270.50,872.00 C271.08,877.42 271.58,886.05 272.00,895.00 C272.42,903.95 272.83,920.58 273.00,925.70" stroke="#228a22" stroke-width="1.2" fill="none" stroke-linejoin="round" /><text x="319.0" y="824.2" fill="#e8e860" font-size="9" text-anchor="start" font-weight="normal">Cz</text><text x="371.0" y="824.2" fill="#5e5e5e" font-size="9" text-anchor="start" font-weight="normal">Répartitions de portance</text><text x="494.0" y="824.2" fill="#e01c1c" font-size="9" text-anchor="start" font-weight="normal">Cordes</text><rect x="316" y="834" width="1" height="141" fill="#8c8c8c"/><rect x="316" y="974" width="211" height="1" fill="#8c8c8c"/><rect x="337" y="971" width="1" height="7" fill="#8c8c8c"/><rect x="358" y="971" width="1" height="7" fill="#8c8c8c"/><rect x="379" y="971" width="1" height="7" fill="#8c8c8c"/><rect x="400" y="971" width="1" height="7" fill="#8c8c8c"/><rect x="421" y="971" width="1" height="7" fill="#8c8c8c"/><rect x="442" y="971" width="1" height="7" fill="#8c8c8c"/><rect x="463" y="971" width="1" height="7" fill="#8c8c8c"/><rect x="484" y="971" width="1" height="7" fill="#8c8c8c"/><rect x="505" y="971" width="1" height="7" fill="#8c8c8c"/><rect x="526" y="971" width="1" height="7" fill="#8c8c8c"/><text x="358.5" y="986.6" fill="#909090" font-size="8.6" text-anchor="middle" font-weight="normal">15,2</text><text x="400.5" y="986.6" fill="#909090" font-size="8.6" text-anchor="middle" font-weight="normal">30,4</text><text x="442.5" y="986.6" fill="#909090" font-size="8.6" text-anchor="middle" font-weight="normal">45,6</text><text x="484.5" y="986.6" fill="#909090" font-size="8.6" text-anchor="middle" font-weight="normal">60,8</text><text x="526.5" y="986.6" fill="#909090" font-size="8.6" text-anchor="middle" font-weight="normal">76,0</text><text x="511.0" y="973.2" fill="#909090" font-size="9" text-anchor="start" font-weight="normal">cm</text><polyline points="317.1,870.0 320.4,870.0 323.8,870.1 327.1,870.2 330.5,870.3 333.8,870.5 337.2,870.7 340.5,871.0 343.9,871.2 347.2,871.5 350.6,871.8 353.9,872.2 357.2,872.5 360.6,872.9 363.9,873.4 367.3,873.8 370.6,874.3 374.0,874.8 377.3,875.3 380.7,875.9 384.0,876.5 387.3,877.1 390.7,877.7 394.0,878.4 397.4,879.1 400.7,879.8 404.1,880.6 407.4,881.4 410.8,882.2 414.1,883.1 417.4,884.0 420.8,884.9 424.1,885.8 427.5,886.8 430.8,887.8 434.2,888.9 437.5,890.0 440.9,891.2 444.2,892.3 447.6,893.6 450.9,894.8 454.2,896.2 457.6,897.5 460.9,899.0 464.3,900.5 467.6,902.0 471.0,903.6 474.3,905.3 477.7,907.1 481.0,909.0 484.4,910.9 487.7,913.0 491.0,915.2 494.4,917.5 497.7,920.0 501.1,922.6 504.4,925.6 507.8,928.8 511.1,932.4 514.5,936.8 517.8,942.3 522.1,957.0 525.5,963.0" stroke="#a01010" stroke-width="2.0" fill="none" stroke-linejoin="round" /><polyline points="316.3,870.0 319.6,870.0 323.0,870.1 326.3,870.2 329.7,870.3 333.0,870.5 336.4,870.7 339.7,871.0 343.1,871.2 346.4,871.5 349.8,871.8 353.1,872.2 356.4,872.5 359.8,872.9 363.1,873.4 366.5,873.8 369.8,874.3 373.2,874.8 376.5,875.3 379.9,875.9 383.2,876.5 386.5,877.1 389.9,877.7 393.2,878.4 396.6,879.1 399.9,879.8 403.3,880.6 406.6,881.4 410.0,882.2 413.3,883.1 416.6,884.0 420.0,884.9 423.3,885.8 426.7,886.8 430.0,887.8 433.4,888.9 436.7,890.0 440.1,891.2 443.4,892.3 446.8,893.6 450.1,894.8 453.4,896.2 456.8,897.5 460.1,899.0 463.5,900.5 466.8,902.0 470.2,903.6 473.5,905.3 476.9,907.1 480.2,909.0 483.6,910.9 486.9,913.0 490.2,915.2 493.6,917.5 496.9,920.0 500.3,922.6 503.6,925.6 507.0,928.8 510.3,932.4 513.7,936.8 517.0,942.3 521.3,957.0 524.6,970.0" stroke="#f0d040" stroke-width="1.3" fill="none" stroke-linejoin="round" /><text x="666.0" y="832.2" fill="#2aa02a" font-size="9" text-anchor="start" font-weight="normal">Cz</text><text x="718.0" y="832.2" fill="#5e5e5e" font-size="9" text-anchor="start" font-weight="normal">Répartitions de portance</text><text x="841.0" y="832.2" fill="#e01c1c" font-size="9" text-anchor="start" font-weight="normal">Cordes</text><rect x="663" y="841" width="1" height="141" fill="#8c8c8c"/><rect x="663" y="981" width="211" height="1" fill="#8c8c8c"/><rect x="684" y="978" width="1" height="7" fill="#8c8c8c"/><rect x="705" y="978" width="1" height="7" fill="#8c8c8c"/><rect x="726" y="978" width="1" height="7" fill="#8c8c8c"/><rect x="747" y="978" width="1" height="7" fill="#8c8c8c"/><rect x="768" y="978" width="1" height="7" fill="#8c8c8c"/><rect x="789" y="978" width="1" height="7" fill="#8c8c8c"/><rect x="810" y="978" width="1" height="7" fill="#8c8c8c"/><rect x="831" y="978" width="1" height="7" fill="#8c8c8c"/><rect x="852" y="978" width="1" height="7" fill="#8c8c8c"/><rect x="873" y="978" width="1" height="7" fill="#8c8c8c"/><text x="650.0" y="880.5" fill="#909090" font-size="8.6" text-anchor="middle" font-weight="normal">100</text><text x="768.5" y="993.6" fill="#909090" font-size="8.6" text-anchor="middle" font-weight="normal">50</text><text x="873.5" y="993.6" fill="#909090" font-size="8.6" text-anchor="middle" font-weight="normal">100</text><polyline points="663.5,877.4 664.0,877.4 664.5,877.4 665.1,877.4 665.6,877.4 666.1,877.4 666.6,877.4 667.2,877.4 667.7,877.4 668.2,877.4 668.7,877.4 669.2,877.4 669.8,877.4 670.3,877.5 670.8,877.5 671.3,877.5 671.9,877.5 672.4,877.5 672.9,877.5 673.4,877.5 674.0,877.5 674.5,877.5 675.0,877.6 675.5,877.6 676.0,877.6 676.6,877.6 677.1,877.6 677.6,877.6 678.1,877.7 678.7,877.7 679.2,877.7 679.7,877.7 680.2,877.7 680.7,877.8 681.3,877.8 681.8,877.8 682.3,877.8 682.8,877.8 683.4,877.9 683.9,877.9 684.4,877.9 684.9,877.9 685.4,878.0 686.0,878.0 686.5,878.0 687.0,878.1 687.5,878.1 688.1,878.1 688.6,878.1 689.1,878.2 689.6,878.2 690.1,878.2 690.7,878.3 691.2,878.3 691.7,878.3 692.2,878.4 692.8,878.4 693.3,878.5 693.8,878.5 694.3,878.5 694.9,878.6 695.4,878.6 695.9,878.7 696.4,878.7 696.9,878.7 697.5,878.8 698.0,878.8 698.5,878.9 699.0,878.9 699.6,879.0 700.1,879.0 700.6,879.0 701.1,879.1 701.6,879.1 702.2,879.2 702.7,879.2 703.2,879.3 703.7,879.3 704.3,879.4 704.8,879.4 705.3,879.5 705.8,879.5 706.3,879.6 706.9,879.7 707.4,879.7 707.9,879.8 708.4,879.8 709.0,879.9 709.5,879.9 710.0,880.0 710.5,880.1 711.0,880.1 711.6,880.2 712.1,880.2 712.6,880.3 713.1,880.4 713.7,880.4 714.2,880.5 714.7,880.6 715.2,880.6 715.8,880.7 716.3,880.8 716.8,880.8 717.3,880.9 717.8,881.0 718.4,881.0 718.9,881.1 719.4,881.2 719.9,881.2 720.5,881.3 721.0,881.4 721.5,881.5 722.0,881.5 722.5,881.6 723.1,881.7 723.6,881.8 724.1,881.9 724.6,881.9 725.2,882.0 725.7,882.1 726.2,882.2 726.7,882.3 727.2,882.3 727.8,882.4 728.3,882.5 728.8,882.6 729.3,882.7 729.9,882.8 730.4,882.8 730.9,882.9 731.4,883.0 731.9,883.1 732.5,883.2 733.0,883.3 733.5,883.4 734.0,883.5 734.6,883.6 735.1,883.7 735.6,883.8 736.1,883.9 736.6,884.0 737.2,884.0 737.7,884.1 738.2,884.2 738.7,884.3 739.3,884.4 739.8,884.5 740.3,884.6 740.8,884.8 741.4,884.9 741.9,885.0 742.4,885.1 742.9,885.2 743.4,885.3 744.0,885.4 744.5,885.5 745.0,885.6 745.5,885.7 746.1,885.8 746.6,885.9 747.1,886.0 747.6,886.2 748.1,886.3 748.7,886.4 749.2,886.5 749.7,886.6 750.2,886.7 750.8,886.9 751.3,887.0 751.8,887.1 752.3,887.2 752.8,887.3 753.4,887.5 753.9,887.6 754.4,887.7 754.9,887.8 755.5,888.0 756.0,888.1 756.5,888.2 757.0,888.4 757.5,888.5 758.1,888.6 758.6,888.7 759.1,888.9 759.6,889.0 760.2,889.1 760.7,889.3 761.2,889.4 761.7,889.6 762.3,889.7 762.8,889.8 763.3,890.0 763.8,890.1 764.3,890.3 764.9,890.4 765.4,890.5 765.9,890.7 766.4,890.8 767.0,891.0 767.5,891.1 768.0,891.3 768.5,891.4 769.0,891.6 769.6,891.7 770.1,891.9 770.6,892.0 771.1,892.2 771.7,892.4 772.2,892.5 772.7,892.7 773.2,892.8 773.7,893.0 774.3,893.1 774.8,893.3 775.3,893.5 775.8,893.6 776.4,893.8 776.9,894.0 777.4,894.1 777.9,894.3 778.5,894.5 779.0,894.6 779.5,894.8 780.0,895.0 780.5,895.2 781.1,895.3 781.6,895.5 782.1,895.7 782.6,895.9 783.2,896.1 783.7,896.2 784.2,896.4 784.7,896.6 785.2,896.8 785.8,897.0 786.3,897.2 786.8,897.4 787.3,897.5 787.9,897.7 788.4,897.9 788.9,898.1 789.4,898.3 789.9,898.5 790.5,898.7 791.0,898.9 791.5,899.1 792.0,899.3 792.6,899.5 793.1,899.7 793.6,899.9 794.1,900.1 794.6,900.3 795.2,900.5 795.7,900.8 796.2,901.0 796.7,901.2 797.3,901.4 797.8,901.6 798.3,901.8 798.8,902.1 799.4,902.3 799.9,902.5 800.4,902.7 800.9,902.9 801.4,903.2 802.0,903.4 802.5,903.6 803.0,903.9 803.5,904.1 804.1,904.3 804.6,904.6 805.1,904.8 805.6,905.0 806.1,905.3 806.7,905.5 807.2,905.8 807.7,906.0 808.2,906.3 808.8,906.5 809.3,906.8 809.8,907.0 810.3,907.3 810.8,907.5 811.4,907.8 811.9,908.0 812.4,908.3 812.9,908.6 813.5,908.8 814.0,909.1 814.5,909.4 815.0,909.6 815.5,909.9 816.1,910.2 816.6,910.5 817.1,910.8 817.6,911.0 818.2,911.3 818.7,911.6 819.2,911.9 819.7,912.2 820.2,912.5 820.8,912.8 821.3,913.1 821.8,913.4 822.3,913.7 822.9,914.0 823.4,914.3 823.9,914.6 824.4,914.9 825.0,915.2 825.5,915.5 826.0,915.8 826.5,916.2 827.0,916.5 827.6,916.8 828.1,917.1 828.6,917.5 829.1,917.8 829.7,918.2 830.2,918.5 830.7,918.8 831.2,919.2 831.7,919.5 832.3,919.9 832.8,920.2 833.3,920.6 833.8,921.0 834.4,921.3 834.9,921.7 835.4,922.1 835.9,922.5 836.4,922.8 837.0,923.2 837.5,923.6 838.0,924.0 838.5,924.4 839.1,924.8 839.6,925.2 840.1,925.6 840.6,926.0 841.1,926.4 841.7,926.8 842.2,927.3 842.7,927.7 843.2,928.1 843.8,928.6 844.3,929.0 844.8,929.5 845.3,929.9 845.9,930.4 846.4,930.8 846.9,931.3 847.4,931.8 847.9,932.3 848.5,932.8 849.0,933.3 849.5,933.8 850.0,934.3 850.6,934.8 851.1,935.3 851.6,935.8 852.1,936.4 852.6,936.9 853.2,937.5 853.7,938.0 854.2,938.6 854.7,939.2 855.3,939.8 855.8,940.4 856.3,941.0 856.8,941.6 857.3,942.3 857.9,942.9 858.4,943.6 858.9,944.3 859.4,944.9 860.0,945.7 860.5,946.4 861.0,947.1 861.5,947.9 862.0,948.7 862.6,949.4 863.1,950.3 863.6,951.1 864.1,952.0 864.7,952.9 865.2,953.8 865.7,954.8 866.2,955.8 866.8,956.9 867.3,958.0 867.8,959.1 868.3,960.4 868.8,961.7 869.4,963.1 869.9,964.7 870.4,966.4 870.9,968.3 871.5,970.7 872.0,973.7 872.5,981.0" stroke="#c81a28" stroke-width="1.3" fill="none" stroke-linejoin="round" /><path d="M663.50,877.40 C669.58,877.27 683.92,876.87 700.00,876.60 C716.08,876.33 740.00,876.13 760.00,875.80 C780.00,875.47 801.33,875.23 820.00,874.60 C838.67,873.97 863.33,872.43 872.00,872.00" stroke="#228a22" stroke-width="1.2" fill="none" stroke-linejoin="round" /><text x="917.0" y="832.2" fill="#e8e860" font-size="9" text-anchor="start" font-weight="normal">Cz</text><text x="969.0" y="832.2" fill="#5e5e5e" font-size="9" text-anchor="start" font-weight="normal">Répartitions de portance</text><text x="1092.0" y="832.2" fill="#e01c1c" font-size="9" text-anchor="start" font-weight="normal">Cordes</text><rect x="914" y="841" width="1" height="141" fill="#8c8c8c"/><rect x="914" y="981" width="211" height="1" fill="#8c8c8c"/><rect x="935" y="978" width="1" height="7" fill="#8c8c8c"/><rect x="956" y="978" width="1" height="7" fill="#8c8c8c"/><rect x="977" y="978" width="1" height="7" fill="#8c8c8c"/><rect x="998" y="978" width="1" height="7" fill="#8c8c8c"/><rect x="1019" y="978" width="1" height="7" fill="#8c8c8c"/><rect x="1040" y="978" width="1" height="7" fill="#8c8c8c"/><rect x="1061" y="978" width="1" height="7" fill="#8c8c8c"/><rect x="1082" y="978" width="1" height="7" fill="#8c8c8c"/><rect x="1103" y="978" width="1" height="7" fill="#8c8c8c"/><rect x="1124" y="978" width="1" height="7" fill="#8c8c8c"/><text x="956.5" y="993.6" fill="#909090" font-size="8.6" text-anchor="middle" font-weight="normal">15,2</text><text x="998.5" y="993.6" fill="#909090" font-size="8.6" text-anchor="middle" font-weight="normal">30,4</text><text x="1040.5" y="993.6" fill="#909090" font-size="8.6" text-anchor="middle" font-weight="normal">45,6</text><text x="1082.5" y="993.6" fill="#909090" font-size="8.6" text-anchor="middle" font-weight="normal">60,8</text><text x="1124.5" y="993.6" fill="#909090" font-size="8.6" text-anchor="middle" font-weight="normal">76,0</text><text x="1109.0" y="980.2" fill="#909090" font-size="9" text-anchor="start" font-weight="normal">cm</text><polyline points="915.1,876.7 918.5,876.7 921.8,876.8 925.2,876.9 928.5,877.1 931.9,877.2 935.2,877.5 938.6,877.7 941.9,878.0 945.3,878.3 948.6,878.7 952.0,879.1 955.3,879.5 958.7,879.9 962.0,880.4 965.4,880.9 968.7,881.5 972.1,882.1 975.4,882.7 978.8,883.3 982.1,884.0 985.5,884.7 988.8,885.5 992.2,886.2 995.5,887.0 998.9,887.9 1002.2,888.8 1005.6,889.7 1008.9,890.6 1012.3,891.6 1015.6,892.6 1019.0,893.7 1022.4,894.8 1025.7,895.9 1029.1,897.1 1032.4,898.3 1035.8,899.6 1039.1,900.9 1042.5,902.2 1045.8,903.6 1049.2,905.1 1052.5,906.6 1055.9,908.1 1059.2,909.7 1062.6,911.4 1065.9,913.1 1069.3,914.8 1072.6,916.7 1076.0,918.6 1079.3,920.6 1082.7,922.6 1086.0,924.7 1089.4,926.9 1092.7,929.2 1096.1,931.7 1099.4,934.2 1102.8,936.8 1106.1,939.6 1109.5,942.5 1112.8,945.5 1116.2,948.8 1119.4,961.3 1123.0,970.0" stroke="#a01010" stroke-width="2.0" fill="none" stroke-linejoin="round" /><polyline points="914.3,876.7 917.7,876.7 921.0,876.8 924.4,876.9 927.7,877.1 931.1,877.2 934.4,877.5 937.8,877.7 941.1,878.0 944.5,878.3 947.8,878.7 951.2,879.1 954.5,879.5 957.9,879.9 961.2,880.4 964.6,880.9 967.9,881.5 971.3,882.1 974.6,882.7 978.0,883.3 981.3,884.0 984.7,884.7 988.0,885.5 991.4,886.2 994.7,887.0 998.1,887.9 1001.4,888.8 1004.8,889.7 1008.1,890.6 1011.5,891.6 1014.9,892.6 1018.2,893.7 1021.6,894.8 1024.9,895.9 1028.3,897.1 1031.6,898.3 1035.0,899.6 1038.3,900.9 1041.7,902.2 1045.0,903.6 1048.4,905.1 1051.7,906.6 1055.1,908.1 1058.4,909.7 1061.8,911.4 1065.1,913.1 1068.5,914.8 1071.8,916.7 1075.2,918.6 1078.5,920.6 1081.9,922.6 1085.2,924.7 1088.6,926.9 1091.9,929.2 1095.3,931.7 1098.6,934.2 1102.0,936.8 1105.3,939.6 1108.7,942.5 1112.0,945.5 1115.4,948.8 1118.6,961.3 1121.8,977.3" stroke="#f0d040" stroke-width="1.3" fill="none" stroke-linejoin="round" /><text x="665.0" y="640.2" fill="#2aa02a" font-size="9" text-anchor="start" font-weight="normal">- ReMoy</text><text x="749.0" y="640.2" fill="#2828e8" font-size="9" text-anchor="start" font-weight="normal">- ReEmp</text><text x="837.0" y="640.2" fill="#e82020" font-size="9" text-anchor="start" font-weight="normal">- ReSau</text><rect x="663" y="649" width="1" height="152" fill="#8c8c8c"/><rect x="663" y="725" width="210" height="1" fill="#8c8c8c"/><rect x="677" y="722" width="1" height="7" fill="#8c8c8c"/><rect x="691" y="722" width="1" height="7" fill="#8c8c8c"/><rect x="705" y="722" width="1" height="7" fill="#8c8c8c"/><rect x="719" y="722" width="1" height="7" fill="#8c8c8c"/><rect x="733" y="722" width="1" height="7" fill="#8c8c8c"/><rect x="747" y="722" width="1" height="7" fill="#8c8c8c"/><rect x="761" y="722" width="1" height="7" fill="#8c8c8c"/><rect x="774" y="722" width="1" height="7" fill="#8c8c8c"/><rect x="788" y="722" width="1" height="7" fill="#8c8c8c"/><rect x="802" y="722" width="1" height="7" fill="#8c8c8c"/><rect x="816" y="722" width="1" height="7" fill="#8c8c8c"/><rect x="830" y="722" width="1" height="7" fill="#8c8c8c"/><rect x="844" y="722" width="1" height="7" fill="#8c8c8c"/><rect x="858" y="722" width="1" height="7" fill="#8c8c8c"/><rect x="872" y="722" width="1" height="7" fill="#8c8c8c"/><rect x="660" y="795" width="8" height="1" fill="#8c8c8c"/><text x="659.0" y="798.6" fill="#909090" font-size="8.6" text-anchor="end" font-weight="normal">-1,5</text><rect x="660" y="781" width="8" height="1" fill="#8c8c8c"/><text x="659.0" y="784.6" fill="#909090" font-size="8.6" text-anchor="end" font-weight="normal">-1,2</text><rect x="660" y="767" width="8" height="1" fill="#8c8c8c"/><text x="659.0" y="770.6" fill="#909090" font-size="8.6" text-anchor="end" font-weight="normal">-0,9</text><rect x="660" y="753" width="8" height="1" fill="#8c8c8c"/><text x="659.0" y="756.6" fill="#909090" font-size="8.6" text-anchor="end" font-weight="normal">-0,6</text><rect x="660" y="739" width="8" height="1" fill="#8c8c8c"/><text x="659.0" y="742.6" fill="#909090" font-size="8.6" text-anchor="end" font-weight="normal">-0,3</text><rect x="660" y="711" width="8" height="1" fill="#8c8c8c"/><text x="659.0" y="714.6" fill="#909090" font-size="8.6" text-anchor="end" font-weight="normal">0,3</text><rect x="660" y="697" width="8" height="1" fill="#8c8c8c"/><text x="659.0" y="700.6" fill="#909090" font-size="8.6" text-anchor="end" font-weight="normal">0,6</text><rect x="660" y="683" width="8" height="1" fill="#8c8c8c"/><text x="659.0" y="686.6" fill="#909090" font-size="8.6" text-anchor="end" font-weight="normal">0,9</text><rect x="660" y="669" width="8" height="1" fill="#8c8c8c"/><text x="659.0" y="672.6" fill="#909090" font-size="8.6" text-anchor="end" font-weight="normal">1,2</text><rect x="660" y="655" width="8" height="1" fill="#8c8c8c"/><text x="659.0" y="658.6" fill="#909090" font-size="8.6" text-anchor="end" font-weight="normal">1,5</text><text x="665.0" y="659.2" fill="#909090" font-size="9" text-anchor="start" font-weight="normal">Cz</text><text x="860.0" y="724.2" fill="#909090" font-size="9" text-anchor="start" font-weight="normal">Cx</text><text x="731.8" y="737.6" fill="#909090" font-size="8.6" text-anchor="middle" font-weight="normal">0,050</text><text x="802.2" y="737.6" fill="#909090" font-size="8.6" text-anchor="middle" font-weight="normal">0,100</text><text x="870.4" y="737.6" fill="#909090" font-size="8.6" text-anchor="middle" font-weight="normal">0,150</text><text x="767.6" y="809.7" fill="#909090" font-size="9" text-anchor="middle" font-weight="normal">Polaires</text><text x="916.0" y="640.2" fill="#2aa02a" font-size="9" text-anchor="start" font-weight="normal">- ReMoy</text><text x="1000.0" y="640.2" fill="#2828e8" font-size="9" text-anchor="start" font-weight="normal">- ReEmp</text><text x="1088.0" y="640.2" fill="#e82020" font-size="9" text-anchor="start" font-weight="normal">- ReSau</text><rect x="914" y="649" width="1" height="152" fill="#8c8c8c"/><rect x="914" y="725" width="210" height="1" fill="#8c8c8c"/><rect x="928" y="722" width="1" height="7" fill="#8c8c8c"/><rect x="942" y="722" width="1" height="7" fill="#8c8c8c"/><rect x="956" y="722" width="1" height="7" fill="#8c8c8c"/><rect x="970" y="722" width="1" height="7" fill="#8c8c8c"/><rect x="984" y="722" width="1" height="7" fill="#8c8c8c"/><rect x="998" y="722" width="1" height="7" fill="#8c8c8c"/><rect x="1012" y="722" width="1" height="7" fill="#8c8c8c"/><rect x="1025" y="722" width="1" height="7" fill="#8c8c8c"/><rect x="1039" y="722" width="1" height="7" fill="#8c8c8c"/><rect x="1053" y="722" width="1" height="7" fill="#8c8c8c"/><rect x="1067" y="722" width="1" height="7" fill="#8c8c8c"/><rect x="1081" y="722" width="1" height="7" fill="#8c8c8c"/><rect x="1095" y="722" width="1" height="7" fill="#8c8c8c"/><rect x="1109" y="722" width="1" height="7" fill="#8c8c8c"/><rect x="1123" y="722" width="1" height="7" fill="#8c8c8c"/><rect x="911" y="795" width="8" height="1" fill="#8c8c8c"/><text x="910.0" y="798.6" fill="#909090" font-size="8.6" text-anchor="end" font-weight="normal">-1,5</text><rect x="911" y="781" width="8" height="1" fill="#8c8c8c"/><text x="910.0" y="784.6" fill="#909090" font-size="8.6" text-anchor="end" font-weight="normal">-1,2</text><rect x="911" y="767" width="8" height="1" fill="#8c8c8c"/><text x="910.0" y="770.6" fill="#909090" font-size="8.6" text-anchor="end" font-weight="normal">-0,9</text><rect x="911" y="753" width="8" height="1" fill="#8c8c8c"/><text x="910.0" y="756.6" fill="#909090" font-size="8.6" text-anchor="end" font-weight="normal">-0,6</text><rect x="911" y="739" width="8" height="1" fill="#8c8c8c"/><text x="910.0" y="742.6" fill="#909090" font-size="8.6" text-anchor="end" font-weight="normal">-0,3</text><rect x="911" y="711" width="8" height="1" fill="#8c8c8c"/><text x="910.0" y="714.6" fill="#909090" font-size="8.6" text-anchor="end" font-weight="normal">0,3</text><rect x="911" y="697" width="8" height="1" fill="#8c8c8c"/><text x="910.0" y="700.6" fill="#909090" font-size="8.6" text-anchor="end" font-weight="normal">0,6</text><rect x="911" y="683" width="8" height="1" fill="#8c8c8c"/><text x="910.0" y="686.6" fill="#909090" font-size="8.6" text-anchor="end" font-weight="normal">0,9</text><rect x="911" y="669" width="8" height="1" fill="#8c8c8c"/><text x="910.0" y="672.6" fill="#909090" font-size="8.6" text-anchor="end" font-weight="normal">1,2</text><rect x="911" y="655" width="8" height="1" fill="#8c8c8c"/><text x="910.0" y="658.6" fill="#909090" font-size="8.6" text-anchor="end" font-weight="normal">1,5</text><text x="916.0" y="659.2" fill="#909090" font-size="9" text-anchor="start" font-weight="normal">Cz</text><text x="1111.0" y="724.2" fill="#909090" font-size="9" text-anchor="start" font-weight="normal">Cx</text><text x="982.8" y="737.6" fill="#909090" font-size="8.6" text-anchor="middle" font-weight="normal">0,050</text><text x="1053.2" y="737.6" fill="#909090" font-size="8.6" text-anchor="middle" font-weight="normal">0,100</text><text x="1121.4" y="737.6" fill="#909090" font-size="8.6" text-anchor="middle" font-weight="normal">0,150</text><text x="1018.6" y="809.7" fill="#909090" font-size="9" text-anchor="middle" font-weight="normal">Polaires</text><polyline points="846.6,752.8 815.2,750.7 793.5,749.2 750.2,745.5 717.8,741.1 696.1,737.2 685.3,733.4 677.7,728.6 675.6,722.1 675.6,715.6 677.7,702.6 683.1,689.6 691.8,678.8 700.5,673.4 709.1,671.9 728.6,671.9 745.9,673.6 756.7,675.3" stroke="#2020d8" stroke-width="1.8" fill="none" stroke-linejoin="round" /><polyline points="678.8,727.5 677.7,715.6 679.9,700.4 685.3,687.5 694.0,677.7 704.8,674.5 717.8,673.4 739.4,673.4 754.6,674.9" stroke="#20a020" stroke-width="1.1" fill="none" stroke-linejoin="round" /><polyline points="847.7,752.4 832.5,751.3 815.2,750.2 793.5,748.5 771.9,747.0 750.2,744.8 728.6,742.7 706.9,739.4 691.8,735.1 683.1,730.8 681.0,728.2 681.0,728.2 684.2,724.3 685.3,719.9 686.4,711.3 687.5,700.4 689.6,692.9 695.0,686.4 704.8,681.0 719.9,676.6 739.4,675.5 761.1,675.5 782.7,677.7 815.2,681.0 847.7,684.2 875.8,687.9 893.1,688.5" stroke="#e82020" stroke-width="1.4" fill="none" stroke-linejoin="round" /><polyline points="1095.0,751.3 1066.2,750.7 1044.5,749.2 1001.2,745.5 968.8,741.1 947.1,737.2 936.3,733.4 928.7,728.6 926.6,722.1 926.6,715.6 928.7,702.6 934.1,689.6 942.8,678.8 951.5,673.4 960.1,671.9 979.6,671.9 996.9,673.6 1007.7,675.3 1024.4,677.5" stroke="#2020d8" stroke-width="1.8" fill="none" stroke-linejoin="round" /><polyline points="929.8,727.5 928.7,715.6 930.9,700.4 936.3,687.5 945.0,677.7 955.8,674.5 968.8,673.4 990.4,673.4 1005.6,674.9 1044.5,678.8 1073.6,682.7" stroke="#20a020" stroke-width="1.1" fill="none" stroke-linejoin="round" /><polyline points="1095.0,750.9 1083.5,750.7 1066.2,750.2 1044.5,748.5 1022.9,747.0 1001.2,744.8 979.6,742.7 957.9,739.4 942.8,735.1 934.1,730.8 932.0,728.2 932.0,728.2 935.2,724.3 936.3,719.9 937.4,711.3 938.5,700.4 940.6,692.9 946.0,686.4 955.8,681.0 970.9,676.6 990.4,675.5 1012.1,675.5 1033.7,677.7 1066.2,681.0 1098.7,684.2 1126.8,687.9 1144.1,688.5" stroke="#e82020" stroke-width="1.4" fill="none" stroke-linejoin="round" /></svg></body></html>
